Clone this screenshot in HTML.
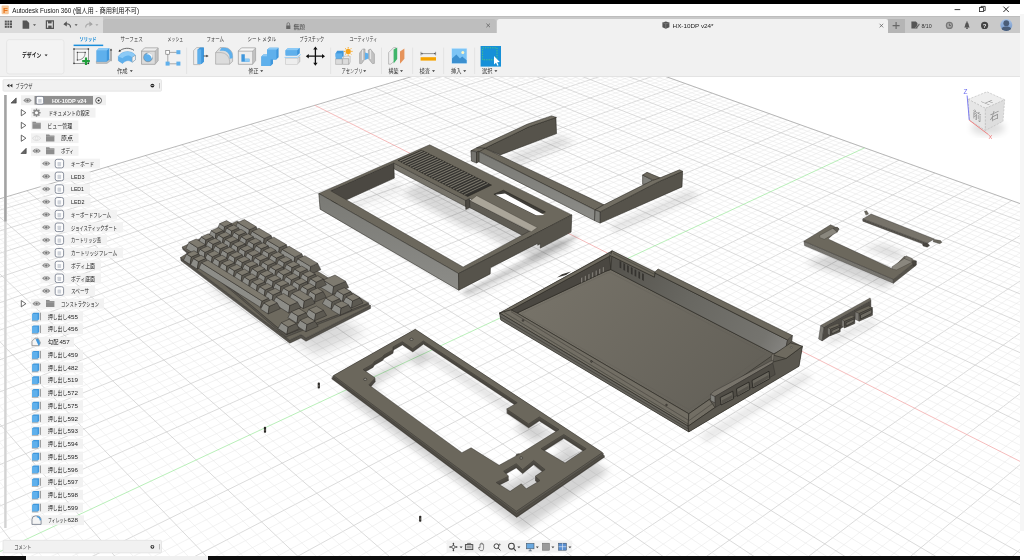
<!DOCTYPE html>
<html lang="ja"><head><meta charset="utf-8"><title>Autodesk Fusion 360</title>
<style>
html,body{margin:0;padding:0}
body{width:1024px;height:560px;overflow:hidden;background:#fff;position:relative;font-family:"Liberation Sans","Noto Sans CJK JP",sans-serif}
.abs{position:absolute}
#blacktop{left:0;top:0;width:1019.7px;height:3.7px;background:#000}
#rightstrip{left:1019.7px;top:14px;width:4.3px;height:517px;background:#f6f6f6}
#titlebar{left:0;top:3.7px;width:1019.7px;height:12.9px;background:#fff}
#toolbar{left:0;top:16.4px;width:1019.7px;height:16.8px;background:#c9c9c9;border-top:.8px solid #bdbdbd;box-sizing:border-box}
#qat{left:0;top:0;width:103px;height:16px;background:#dbdbdb}
#tab1{left:103px;top:2px;width:393px;height:14px;background:#bebebe;border-radius:2.5px 2.5px 0 0}
#tab2{left:496.6px;top:1.6px;width:391px;height:15px;background:#f1f1f1;border-radius:2.5px 2.5px 0 0}
#plus{left:888px;top:1.8px;width:16.6px;height:14.2px;background:#b5b5b5}
#ribbon{left:0;top:33px;width:1019.7px;height:43.6px;background:#f1f1f1;border-bottom:.7px solid #e3e3e3;box-sizing:border-box}
#viewport{left:0;top:77px;width:1019.7px;height:478.7px;overflow:hidden;background:#fff}
#viewport svg.vp{position:absolute;left:0;top:0;will-change:transform}
#bottombar{left:0;top:555.6px;width:1019.7px;height:4.4px;background:#0d0d0d}
#bottomlight{left:25.5px;top:0;width:182.5px;height:4.4px;background:#f0f0f0}
#ui{left:0;top:0;width:1024px;height:560px;pointer-events:none;will-change:transform}
#ui text{font-family:"Liberation Sans","Noto Sans CJK JP",sans-serif}
.grid line{stroke-width:.5}
.grid .m{stroke:#e7e7e7;stroke-width:.55}
.grid .M{stroke:#cbcbcb;stroke-width:.7}
.grid .E{stroke:#9c9c9c;stroke-width:.7}
.grid .R{stroke:#f2a0a0;stroke-width:.7}
.grid .G{stroke:#9be89b;stroke-width:.7}
</style></head>
<body>
<div id="blacktop" class="abs"></div>
<div id="rightstrip" class="abs"></div>
<div id="titlebar" class="abs"></div>
<div id="toolbar" class="abs"><div id="qat" class="abs"></div><div id="tab1" class="abs"></div><div id="tab2" class="abs"></div><div id="plus" class="abs"></div></div>
<div id="ribbon" class="abs"></div>
<div id="viewport" class="abs">
<svg class="vp" width="1020" height="479" viewBox="0 77 1020 479">
<g class="grid"><line x1="-236.2" y1="272.5" x2="554.7" y2="36.7" class="m"/>
<line x1="-233.5" y1="276.2" x2="559.1" y2="38.3" class="m"/>
<line x1="-230.9" y1="279.8" x2="563.6" y2="39.9" class="M"/>
<line x1="-228.2" y1="283.5" x2="568.0" y2="41.5" class="m"/>
<line x1="-225.5" y1="287.3" x2="572.5" y2="43.1" class="m"/>
<line x1="-222.8" y1="291.0" x2="577.1" y2="44.7" class="m"/>
<line x1="-220.0" y1="294.9" x2="581.6" y2="46.3" class="m"/>
<line x1="-217.3" y1="298.7" x2="586.2" y2="48.0" class="M"/>
<line x1="-214.4" y1="302.6" x2="590.8" y2="49.6" class="m"/>
<line x1="-211.6" y1="306.6" x2="595.5" y2="51.3" class="m"/>
<line x1="-208.7" y1="310.6" x2="600.2" y2="53.0" class="m"/>
<line x1="-205.8" y1="314.6" x2="604.9" y2="54.7" class="m"/>
<line x1="-202.9" y1="318.7" x2="609.6" y2="56.4" class="M"/>
<line x1="-199.9" y1="322.8" x2="614.4" y2="58.1" class="m"/>
<line x1="-196.9" y1="327.0" x2="619.2" y2="59.8" class="m"/>
<line x1="-193.9" y1="331.2" x2="624.1" y2="61.6" class="m"/>
<line x1="-190.8" y1="335.5" x2="629.0" y2="63.3" class="m"/>
<line x1="-187.7" y1="339.8" x2="633.9" y2="65.1" class="M"/>
<line x1="-184.5" y1="344.1" x2="638.8" y2="66.9" class="m"/>
<line x1="-181.4" y1="348.5" x2="643.8" y2="68.7" class="m"/>
<line x1="-178.1" y1="353.0" x2="648.9" y2="70.5" class="m"/>
<line x1="-174.9" y1="357.5" x2="653.9" y2="72.3" class="m"/>
<line x1="-171.6" y1="362.1" x2="659.0" y2="74.1" class="M"/>
<line x1="-168.3" y1="366.7" x2="664.2" y2="76.0" class="m"/>
<line x1="-164.9" y1="371.4" x2="669.4" y2="77.8" class="m"/>
<line x1="-161.5" y1="376.1" x2="674.6" y2="79.7" class="m"/>
<line x1="-158.1" y1="380.9" x2="679.8" y2="81.6" class="m"/>
<line x1="-154.6" y1="385.7" x2="685.1" y2="83.5" class="M"/>
<line x1="-151.0" y1="390.6" x2="690.5" y2="85.4" class="m"/>
<line x1="-147.5" y1="395.6" x2="695.8" y2="87.3" class="m"/>
<line x1="-143.8" y1="400.6" x2="701.2" y2="89.3" class="m"/>
<line x1="-140.2" y1="405.7" x2="706.7" y2="91.2" class="m"/>
<line x1="-136.5" y1="410.8" x2="712.2" y2="93.2" class="M"/>
<line x1="-132.7" y1="416.0" x2="717.7" y2="95.2" class="m"/>
<line x1="-128.9" y1="421.3" x2="723.3" y2="97.2" class="m"/>
<line x1="-125.1" y1="426.6" x2="728.9" y2="99.2" class="m"/>
<line x1="-121.2" y1="432.0" x2="734.6" y2="101.2" class="m"/>
<line x1="-117.2" y1="437.5" x2="740.3" y2="103.3" class="M"/>
<line x1="-113.2" y1="443.1" x2="746.1" y2="105.3" class="m"/>
<line x1="-109.2" y1="448.7" x2="751.9" y2="107.4" class="m"/>
<line x1="-105.1" y1="454.4" x2="757.7" y2="109.5" class="m"/>
<line x1="-100.9" y1="460.1" x2="763.6" y2="111.6" class="m"/>
<line x1="-96.7" y1="466.0" x2="769.6" y2="113.8" class="M"/>
<line x1="-92.5" y1="471.9" x2="775.5" y2="115.9" class="m"/>
<line x1="-88.1" y1="477.9" x2="781.6" y2="118.1" class="m"/>
<line x1="-83.8" y1="484.0" x2="787.7" y2="120.2" class="m"/>
<line x1="-79.3" y1="490.1" x2="793.8" y2="122.4" class="m"/>
<line x1="-74.8" y1="496.4" x2="800.0" y2="124.7" class="M"/>
<line x1="-70.3" y1="502.7" x2="806.2" y2="126.9" class="m"/>
<line x1="-65.6" y1="509.1" x2="812.5" y2="129.1" class="m"/>
<line x1="-61.0" y1="515.6" x2="818.8" y2="131.4" class="m"/>
<line x1="-56.2" y1="522.2" x2="825.2" y2="133.7" class="m"/>
<line x1="-51.4" y1="528.9" x2="831.6" y2="136.0" class="M"/>
<line x1="-46.5" y1="535.7" x2="838.1" y2="138.3" class="m"/>
<line x1="-41.5" y1="542.5" x2="844.7" y2="140.7" class="m"/>
<line x1="-36.5" y1="549.5" x2="851.3" y2="143.1" class="m"/>
<line x1="-31.4" y1="556.6" x2="857.9" y2="145.4" class="m"/>
<line x1="-21.0" y1="571.1" x2="871.4" y2="150.3" class="m"/>
<line x1="-15.6" y1="578.5" x2="878.2" y2="152.7" class="m"/>
<line x1="-10.2" y1="586.0" x2="885.1" y2="155.2" class="m"/>
<line x1="-4.7" y1="593.6" x2="892.0" y2="157.7" class="m"/>
<line x1="0.8" y1="601.3" x2="899.0" y2="160.2" class="M"/>
<line x1="6.5" y1="609.2" x2="906.1" y2="162.7" class="m"/>
<line x1="12.2" y1="617.1" x2="913.2" y2="165.3" class="m"/>
<line x1="18.1" y1="625.2" x2="920.4" y2="167.8" class="m"/>
<line x1="24.0" y1="633.4" x2="927.6" y2="170.4" class="m"/>
<line x1="30.0" y1="641.8" x2="934.9" y2="173.1" class="M"/>
<line x1="36.1" y1="650.3" x2="942.3" y2="175.7" class="m"/>
<line x1="42.3" y1="658.9" x2="949.8" y2="178.4" class="m"/>
<line x1="48.7" y1="667.7" x2="957.3" y2="181.1" class="m"/>
<line x1="55.1" y1="676.6" x2="964.8" y2="183.8" class="m"/>
<line x1="61.6" y1="685.6" x2="972.5" y2="186.5" class="M"/>
<line x1="68.2" y1="694.8" x2="980.2" y2="189.3" class="m"/>
<line x1="75.0" y1="704.1" x2="987.9" y2="192.1" class="m"/>
<line x1="81.8" y1="713.7" x2="995.8" y2="194.9" class="m"/>
<line x1="88.8" y1="723.3" x2="1003.7" y2="197.7" class="m"/>
<line x1="95.9" y1="733.2" x2="1011.7" y2="200.6" class="M"/>
<line x1="103.1" y1="743.2" x2="1019.8" y2="203.5" class="m"/>
<line x1="110.4" y1="753.3" x2="1027.9" y2="206.4" class="m"/>
<line x1="117.9" y1="763.7" x2="1036.1" y2="209.4" class="m"/>
<line x1="125.5" y1="774.2" x2="1044.4" y2="212.3" class="m"/>
<line x1="133.2" y1="784.9" x2="1052.8" y2="215.3" class="M"/>
<line x1="141.1" y1="795.9" x2="1061.2" y2="218.4" class="m"/>
<line x1="149.1" y1="807.0" x2="1069.8" y2="221.4" class="m"/>
<line x1="157.2" y1="818.3" x2="1078.4" y2="224.5" class="m"/>
<line x1="165.5" y1="829.8" x2="1087.1" y2="227.6" class="m"/>
<line x1="174.0" y1="841.6" x2="1095.8" y2="230.8" class="M"/>
<line x1="182.6" y1="853.5" x2="1104.7" y2="233.9" class="m"/>
<line x1="191.4" y1="865.7" x2="1113.6" y2="237.2" class="m"/>
<line x1="200.4" y1="878.1" x2="1122.7" y2="240.4" class="m"/>
<line x1="209.5" y1="890.8" x2="1131.8" y2="243.7" class="m"/>
<line x1="218.8" y1="903.7" x2="1141.0" y2="247.0" class="M"/>
<line x1="228.3" y1="916.9" x2="1150.3" y2="250.3" class="m"/>
<line x1="238.0" y1="930.3" x2="1159.7" y2="253.7" class="m"/>
<line x1="247.9" y1="944.0" x2="1169.2" y2="257.1" class="m"/>
<line x1="257.9" y1="958.0" x2="1178.8" y2="260.5" class="m"/>
<line x1="268.2" y1="972.3" x2="1188.4" y2="264.0" class="M"/>
<line x1="278.7" y1="986.9" x2="1198.2" y2="267.5" class="m"/>
<line x1="289.5" y1="1001.7" x2="1208.1" y2="271.0" class="m"/>
<line x1="300.4" y1="1016.9" x2="1218.1" y2="274.6" class="m"/>
<line x1="311.6" y1="1032.5" x2="1228.1" y2="278.2" class="m"/>
<line x1="323.0" y1="1048.3" x2="1238.3" y2="281.9" class="M"/>
<line x1="334.7" y1="1064.5" x2="1248.6" y2="285.6" class="m"/>
<line x1="346.6" y1="1081.1" x2="1259.0" y2="289.3" class="m"/>
<line x1="358.8" y1="1098.0" x2="1269.5" y2="293.1" class="m"/>
<line x1="371.3" y1="1115.3" x2="1280.1" y2="296.9" class="m"/>
<line x1="384.1" y1="1133.1" x2="1290.9" y2="300.7" class="M"/>
<line x1="397.2" y1="1151.2" x2="1301.7" y2="304.6" class="m"/>
<line x1="410.5" y1="1169.7" x2="1312.7" y2="308.5" class="m"/>
<line x1="424.2" y1="1188.7" x2="1323.8" y2="312.5" class="m"/>
<line x1="-238.4" y1="269.4" x2="424.2" y2="1188.7" class="m"/>
<line x1="-227.8" y1="266.2" x2="441.7" y2="1171.7" class="m"/>
<line x1="-217.2" y1="263.1" x2="458.9" y2="1155.0" class="m"/>
<line x1="-206.8" y1="260.0" x2="475.6" y2="1138.7" class="M"/>
<line x1="-196.4" y1="256.9" x2="492.1" y2="1122.6" class="m"/>
<line x1="-186.1" y1="253.8" x2="508.2" y2="1107.0" class="m"/>
<line x1="-176.0" y1="250.8" x2="523.9" y2="1091.6" class="m"/>
<line x1="-165.9" y1="247.8" x2="539.4" y2="1076.5" class="m"/>
<line x1="-155.9" y1="244.9" x2="554.6" y2="1061.8" class="M"/>
<line x1="-146.0" y1="241.9" x2="569.4" y2="1047.3" class="m"/>
<line x1="-136.2" y1="239.0" x2="584.0" y2="1033.1" class="m"/>
<line x1="-126.4" y1="236.1" x2="598.3" y2="1019.2" class="m"/>
<line x1="-116.8" y1="233.3" x2="612.3" y2="1005.6" class="m"/>
<line x1="-107.2" y1="230.4" x2="626.0" y2="992.2" class="M"/>
<line x1="-97.8" y1="227.6" x2="639.5" y2="979.0" class="m"/>
<line x1="-88.4" y1="224.9" x2="652.8" y2="966.1" class="m"/>
<line x1="-79.0" y1="222.1" x2="665.8" y2="953.5" class="m"/>
<line x1="-69.8" y1="219.4" x2="678.5" y2="941.0" class="m"/>
<line x1="-60.7" y1="216.6" x2="691.1" y2="928.8" class="M"/>
<line x1="-51.6" y1="213.9" x2="703.4" y2="916.8" class="m"/>
<line x1="-42.6" y1="211.3" x2="715.5" y2="905.1" class="m"/>
<line x1="-33.6" y1="208.6" x2="727.3" y2="893.5" class="m"/>
<line x1="-24.8" y1="206.0" x2="739.0" y2="882.1" class="m"/>
<line x1="-16.0" y1="203.4" x2="750.5" y2="870.9" class="M"/>
<line x1="-7.3" y1="200.8" x2="761.8" y2="859.9" class="m"/>
<line x1="1.3" y1="198.3" x2="772.9" y2="849.1" class="m"/>
<line x1="9.9" y1="195.7" x2="783.8" y2="838.5" class="m"/>
<line x1="18.4" y1="193.2" x2="794.5" y2="828.1" class="m"/>
<line x1="26.8" y1="190.7" x2="805.0" y2="817.8" class="M"/>
<line x1="35.1" y1="188.2" x2="815.4" y2="807.7" class="m"/>
<line x1="43.4" y1="185.8" x2="825.6" y2="797.8" class="m"/>
<line x1="51.6" y1="183.3" x2="835.6" y2="788.0" class="m"/>
<line x1="59.8" y1="180.9" x2="845.5" y2="778.4" class="m"/>
<line x1="67.9" y1="178.5" x2="855.2" y2="768.9" class="M"/>
<line x1="75.9" y1="176.2" x2="864.8" y2="759.6" class="m"/>
<line x1="83.8" y1="173.8" x2="874.2" y2="750.4" class="m"/>
<line x1="91.7" y1="171.5" x2="883.5" y2="741.4" class="m"/>
<line x1="99.6" y1="169.1" x2="892.6" y2="732.5" class="m"/>
<line x1="107.3" y1="166.8" x2="901.6" y2="723.7" class="M"/>
<line x1="115.0" y1="164.6" x2="910.4" y2="715.1" class="m"/>
<line x1="122.7" y1="162.3" x2="919.2" y2="706.6" class="m"/>
<line x1="130.3" y1="160.0" x2="927.8" y2="698.3" class="m"/>
<line x1="137.8" y1="157.8" x2="936.2" y2="690.0" class="m"/>
<line x1="145.3" y1="155.6" x2="944.6" y2="681.9" class="M"/>
<line x1="152.7" y1="153.4" x2="952.8" y2="673.9" class="m"/>
<line x1="160.0" y1="151.2" x2="960.9" y2="666.0" class="m"/>
<line x1="167.3" y1="149.0" x2="968.8" y2="658.2" class="m"/>
<line x1="174.6" y1="146.9" x2="976.7" y2="650.6" class="m"/>
<line x1="181.8" y1="144.8" x2="984.5" y2="643.0" class="M"/>
<line x1="188.9" y1="142.7" x2="992.1" y2="635.6" class="m"/>
<line x1="196.0" y1="140.6" x2="999.7" y2="628.2" class="m"/>
<line x1="203.0" y1="138.5" x2="1007.1" y2="621.0" class="m"/>
<line x1="210.0" y1="136.4" x2="1014.4" y2="613.8" class="m"/>
<line x1="216.9" y1="134.3" x2="1021.7" y2="606.8" class="M"/>
<line x1="223.8" y1="132.3" x2="1028.8" y2="599.8" class="m"/>
<line x1="230.6" y1="130.3" x2="1035.8" y2="593.0" class="m"/>
<line x1="237.4" y1="128.3" x2="1042.8" y2="586.2" class="m"/>
<line x1="244.1" y1="126.3" x2="1049.6" y2="579.5" class="m"/>
<line x1="250.8" y1="124.3" x2="1056.4" y2="573.0" class="M"/>
<line x1="257.4" y1="122.3" x2="1063.1" y2="566.5" class="m"/>
<line x1="263.9" y1="120.4" x2="1069.6" y2="560.1" class="m"/>
<line x1="270.5" y1="118.5" x2="1076.1" y2="553.7" class="m"/>
<line x1="277.0" y1="116.5" x2="1082.6" y2="547.5" class="m"/>
<line x1="283.4" y1="114.6" x2="1088.9" y2="541.3" class="M"/>
<line x1="289.8" y1="112.7" x2="1095.1" y2="535.2" class="m"/>
<line x1="296.1" y1="110.9" x2="1101.3" y2="529.2" class="m"/>
<line x1="302.4" y1="109.0" x2="1107.4" y2="523.3" class="m"/>
<line x1="308.7" y1="107.1" x2="1113.4" y2="517.4" class="m"/>
<line x1="321.1" y1="103.5" x2="1125.2" y2="505.9" class="m"/>
<line x1="327.2" y1="101.6" x2="1131.0" y2="500.2" class="m"/>
<line x1="333.3" y1="99.8" x2="1136.8" y2="494.7" class="m"/>
<line x1="339.3" y1="98.1" x2="1142.4" y2="489.2" class="m"/>
<line x1="345.3" y1="96.3" x2="1148.0" y2="483.7" class="M"/>
<line x1="351.2" y1="94.5" x2="1153.5" y2="478.3" class="m"/>
<line x1="357.2" y1="92.8" x2="1159.0" y2="473.0" class="m"/>
<line x1="363.0" y1="91.0" x2="1164.4" y2="467.8" class="m"/>
<line x1="368.9" y1="89.3" x2="1169.7" y2="462.6" class="m"/>
<line x1="374.7" y1="87.6" x2="1175.0" y2="457.4" class="M"/>
<line x1="380.4" y1="85.9" x2="1180.2" y2="452.4" class="m"/>
<line x1="386.1" y1="84.2" x2="1185.3" y2="447.3" class="m"/>
<line x1="391.8" y1="82.5" x2="1190.4" y2="442.4" class="m"/>
<line x1="397.4" y1="80.8" x2="1195.5" y2="437.5" class="m"/>
<line x1="403.0" y1="79.2" x2="1200.4" y2="432.6" class="M"/>
<line x1="408.6" y1="77.5" x2="1205.3" y2="427.9" class="m"/>
<line x1="414.1" y1="75.9" x2="1210.2" y2="423.1" class="m"/>
<line x1="419.6" y1="74.2" x2="1215.0" y2="418.4" class="m"/>
<line x1="425.1" y1="72.6" x2="1219.8" y2="413.8" class="m"/>
<line x1="430.5" y1="71.0" x2="1224.5" y2="409.2" class="M"/>
<line x1="435.9" y1="69.4" x2="1229.1" y2="404.7" class="m"/>
<line x1="441.2" y1="67.8" x2="1233.7" y2="400.2" class="m"/>
<line x1="446.5" y1="66.3" x2="1238.3" y2="395.8" class="m"/>
<line x1="451.8" y1="64.7" x2="1242.8" y2="391.4" class="m"/>
<line x1="457.1" y1="63.1" x2="1247.2" y2="387.1" class="M"/>
<line x1="462.3" y1="61.6" x2="1251.6" y2="382.8" class="m"/>
<line x1="467.4" y1="60.1" x2="1256.0" y2="378.5" class="m"/>
<line x1="472.6" y1="58.5" x2="1260.3" y2="374.3" class="m"/>
<line x1="477.7" y1="57.0" x2="1264.5" y2="370.2" class="m"/>
<line x1="482.8" y1="55.5" x2="1268.8" y2="366.1" class="M"/>
<line x1="487.8" y1="54.0" x2="1272.9" y2="362.0" class="m"/>
<line x1="492.8" y1="52.5" x2="1277.1" y2="358.0" class="m"/>
<line x1="497.8" y1="51.1" x2="1281.2" y2="354.0" class="m"/>
<line x1="502.8" y1="49.6" x2="1285.2" y2="350.1" class="m"/>
<line x1="507.7" y1="48.1" x2="1289.2" y2="346.2" class="M"/>
<line x1="512.6" y1="46.7" x2="1293.2" y2="342.3" class="m"/>
<line x1="517.4" y1="45.2" x2="1297.1" y2="338.5" class="m"/>
<line x1="522.3" y1="43.8" x2="1301.0" y2="334.7" class="m"/>
<line x1="527.0" y1="42.4" x2="1304.9" y2="330.9" class="m"/>
<line x1="531.8" y1="41.0" x2="1308.7" y2="327.2" class="M"/>
<line x1="536.6" y1="39.6" x2="1312.4" y2="323.5" class="m"/>
<line x1="541.3" y1="38.2" x2="1316.2" y2="319.9" class="m"/>
<line x1="545.9" y1="36.8" x2="1319.9" y2="316.3" class="m"/>
<line x1="550.6" y1="35.4" x2="1323.5" y2="312.7" class="m"/>
<line x1="-238.4" y1="269.4" x2="550.9" y2="35.3" class="E"/>
<line x1="550.9" y1="35.3" x2="1323.8" y2="312.5" class="E"/>
<line x1="314.9" y1="105.3" x2="1119.4" y2="511.6" class="R"/>
<line x1="-26.2" y1="563.8" x2="864.6" y2="147.8" class="G"/></g>
<defs><filter id="b2" x="-20%" y="-20%" width="140%" height="140%"><feGaussianBlur stdDeviation="2"/></filter><filter id="b3" x="-20%" y="-20%" width="140%" height="140%"><feGaussianBlur stdDeviation="3.5"/></filter><filter id="b5" x="-30%" y="-30%" width="160%" height="160%"><feGaussianBlur stdDeviation="6"/></filter><linearGradient id="gl" x1="0" y1="0" x2="0" y2="1"><stop offset="0" stop-color="#7a7a75"/><stop offset="1" stop-color="#8c8c88"/></linearGradient></defs>
<path d="M347.5 224.4 L435.7 173.6 L574.1 245.1 L473.5 297.1Z M349.8 223.4 L399.9 192.5 L469.0 229.8 L472.8 227.9 L533.5 260.5 L472.1 293.7Z " fill="#000" fill-rule="evenodd" opacity="0.15" filter="url(#b3)"/>
<path d="M462.3 292.6 L574.5 234.7 L579.1 237.1 L466.8 295.2Z " fill="#000" fill-rule="evenodd" opacity="0.22" filter="url(#b2)"/>
<path d="M340.1 209.5 L398.1 183.1 L403.3 185.9 L345.3 212.4Z " fill="#000" fill-rule="evenodd" opacity="0.12" filter="url(#b3)"/>
<polygon points="330.7,190.8 393.8,163.0 394.3,178.1 331.9,206.5" fill="#4b4842" stroke="#262420" stroke-width="0.55" stroke-linejoin="round"/>
<polygon points="393.8,163.0 465.6,200.3 465.8,206.6 394.0,168.8" fill="#77746b" stroke="#262420" stroke-width="0.55" stroke-linejoin="round"/>
<polygon points="469.5,200.1 531.1,232.0 530.8,239.8 469.7,207.5" fill="#5f5c54" stroke="#262420" stroke-width="0.55" stroke-linejoin="round"/>
<polygon points="465.6,200.3 469.5,198.4 469.7,207.5 465.8,209.4" fill="#4b4842" stroke="#262420" stroke-width="0.55" stroke-linejoin="round"/>
<path d="M318.8 193.5 L429.7 144.8 L571.8 214.9 L458.5 273.5Z M330.7 190.8 L393.8 163.0 L465.6 200.3 L469.5 198.4 L531.1 230.3 L463.1 267.0Z " fill="#6c685d" fill-rule="evenodd" stroke="#2e2c28" stroke-width="0.45" stroke-linejoin="round"/>
<polygon points="398.1,160.5 421.6,150.2 491.5,185.1 467.7,196.5" fill="#33322f" stroke="#262420" stroke-width="0.55" stroke-linejoin="round"/>
<polygon points="399.9,161.0 422.4,151.0" fill="none" stroke="#7a766b" stroke-width="1.05" stroke-linejoin="round"/>
<polygon points="402.5,162.3 425.0,152.3" fill="none" stroke="#7a766b" stroke-width="1.05" stroke-linejoin="round"/>
<polygon points="405.1,163.6 427.6,153.6" fill="none" stroke="#7a766b" stroke-width="1.05" stroke-linejoin="round"/>
<polygon points="407.7,165.0 430.2,154.9" fill="none" stroke="#7a766b" stroke-width="1.05" stroke-linejoin="round"/>
<polygon points="410.3,166.3 432.8,156.3" fill="none" stroke="#7a766b" stroke-width="1.05" stroke-linejoin="round"/>
<polygon points="412.9,167.7 435.5,157.6" fill="none" stroke="#7a766b" stroke-width="1.05" stroke-linejoin="round"/>
<polygon points="415.6,169.0 438.1,158.9" fill="none" stroke="#7a766b" stroke-width="1.05" stroke-linejoin="round"/>
<polygon points="418.2,170.4 440.8,160.2" fill="none" stroke="#7a766b" stroke-width="1.05" stroke-linejoin="round"/>
<polygon points="420.9,171.8 443.4,161.6" fill="none" stroke="#7a766b" stroke-width="1.05" stroke-linejoin="round"/>
<polygon points="423.5,173.1 446.1,162.9" fill="none" stroke="#7a766b" stroke-width="1.05" stroke-linejoin="round"/>
<polygon points="426.2,174.5 448.8,164.2" fill="none" stroke="#7a766b" stroke-width="1.05" stroke-linejoin="round"/>
<polygon points="428.9,175.9 451.5,165.6" fill="none" stroke="#7a766b" stroke-width="1.05" stroke-linejoin="round"/>
<polygon points="431.6,177.3 454.2,166.9" fill="none" stroke="#7a766b" stroke-width="1.05" stroke-linejoin="round"/>
<polygon points="434.3,178.7 456.9,168.3" fill="none" stroke="#7a766b" stroke-width="1.05" stroke-linejoin="round"/>
<polygon points="437.0,180.1 459.6,169.7" fill="none" stroke="#7a766b" stroke-width="1.05" stroke-linejoin="round"/>
<polygon points="439.7,181.5 462.4,171.0" fill="none" stroke="#7a766b" stroke-width="1.05" stroke-linejoin="round"/>
<polygon points="442.5,182.9 465.1,172.4" fill="none" stroke="#7a766b" stroke-width="1.05" stroke-linejoin="round"/>
<polygon points="445.2,184.3 467.9,173.8" fill="none" stroke="#7a766b" stroke-width="1.05" stroke-linejoin="round"/>
<polygon points="448.0,185.7 470.6,175.2" fill="none" stroke="#7a766b" stroke-width="1.05" stroke-linejoin="round"/>
<polygon points="450.7,187.1 473.4,176.5" fill="none" stroke="#7a766b" stroke-width="1.05" stroke-linejoin="round"/>
<polygon points="453.5,188.6 476.2,177.9" fill="none" stroke="#7a766b" stroke-width="1.05" stroke-linejoin="round"/>
<polygon points="456.3,190.0 479.0,179.3" fill="none" stroke="#7a766b" stroke-width="1.05" stroke-linejoin="round"/>
<polygon points="459.1,191.5 481.8,180.7" fill="none" stroke="#7a766b" stroke-width="1.05" stroke-linejoin="round"/>
<polygon points="461.9,192.9 484.6,182.2" fill="none" stroke="#7a766b" stroke-width="1.05" stroke-linejoin="round"/>
<polygon points="464.7,194.4 487.4,183.6" fill="none" stroke="#7a766b" stroke-width="1.05" stroke-linejoin="round"/>
<polygon points="470.2,200.8 476.7,195.7 537.3,227.6 531.4,231.7" fill="#aaa599" stroke="#2e2c28" stroke-width="0.3" stroke-linejoin="round"/>
<polygon points="493.9,194.2 503.4,190.2 545.4,211.9 536.0,215.3" fill="#3f3d38" stroke="#262420" stroke-width="0.55" stroke-linejoin="round"/>
<polygon points="495.5,194.8 505.0,193.6 544.4,215.1 536.0,215.3" fill="#ffffff"/>
<polygon points="318.8,193.5 458.5,273.5 458.8,290.2 320.1,209.2" fill="url(#gl)" stroke="#262420" stroke-width="0.55" stroke-linejoin="round"/>
<polygon points="458.5,273.5 571.8,214.9 571.1,232.1 540.3,248.1 540.4,243.8 537.7,245.2 537.8,243.3 490.4,267.8 490.2,273.9 458.8,290.2" fill="#56534b" stroke="#262420" stroke-width="0.55" stroke-linejoin="round"/>
<polygon points="505.0,158.0 560.0,136.0 575.0,142.0 515.0,166.0" fill="#000" opacity="0.12" filter="url(#b3)"/>
<polygon points="610.0,226.0 690.0,190.0 700.0,196.0 615.0,232.0" fill="#000" opacity="0.12" filter="url(#b3)"/>
<polygon points="484.6,148.3 529.0,126.8 555.9,117.4 556.5,133.6 500.3,154.9" fill="#56534b" stroke="#262420" stroke-width="0.55" stroke-linejoin="round"/>
<polygon points="476.5,147.8 527.1,124.3 551.5,115.9 556.5,117.4 529.0,126.8 484.6,148.3" fill="#726e63" stroke="#262420" stroke-width="0.55" stroke-linejoin="round"/>
<polygon points="478.8,151.1 484.6,148.3 603.9,204.8 595.1,210.0" fill="#6c685d" stroke="#262420" stroke-width="0.55" stroke-linejoin="round"/>
<polygon points="478.8,151.5 595.1,210.0 594.5,220.6 478.8,161.8" fill="url(#gl)" stroke="#262420" stroke-width="0.55" stroke-linejoin="round"/>
<polygon points="470.9,150.8 476.3,147.9 485.0,148.4 478.8,151.8" fill="#6c685d" stroke="#262420" stroke-width="0.55" stroke-linejoin="round"/>
<polygon points="470.9,150.8 476.5,152.0 476.5,163.0 471.5,161.1" fill="#74736e" stroke="#262420" stroke-width="0.55" stroke-linejoin="round"/>
<polygon points="476.5,152.0 478.8,151.1 478.8,161.8 476.5,163.0" fill="#56534b" stroke="#262420" stroke-width="0.55" stroke-linejoin="round"/>
<polygon points="642.6,175.0 652.0,180.0 652.0,184.0 642.6,184.4" fill="#82827d" stroke="#262420" stroke-width="0.55" stroke-linejoin="round"/>
<polygon points="642.6,175.0 647.0,172.3 660.8,178.1 657.0,181.9" fill="#6c685d" stroke="#262420" stroke-width="0.55" stroke-linejoin="round"/>
<polygon points="600.1,211.9 658.3,181.9 682.6,171.3 682.0,186.9 600.1,223.1" fill="#56534b" stroke="#262420" stroke-width="0.55" stroke-linejoin="round"/>
<polygon points="600.1,211.9 595.1,209.8 603.9,204.8 652.0,180.6 659.5,178.1 679.5,169.8 682.6,171.3 658.3,181.9" fill="#726e63" stroke="#262420" stroke-width="0.55" stroke-linejoin="round"/>
<polygon points="595.1,210.0 600.1,211.9 600.1,223.1 594.5,220.6" fill="#82827d" stroke="#262420" stroke-width="0.55" stroke-linejoin="round"/>
<polygon points="700.0,436.0 806.0,372.0 812.0,378.0 706.0,442.0" fill="#000" opacity="0.1" filter="url(#b3)"/>
<defs><linearGradient id="gfloor" gradientUnits="userSpaceOnUse" x1="560" y1="270" x2="740" y2="420"><stop offset="0" stop-color="#767268"/><stop offset="1" stop-color="#625f57"/></linearGradient><linearGradient id="gback" gradientUnits="userSpaceOnUse" x1="620" y1="260" x2="790" y2="350"><stop offset="0" stop-color="#56544e"/><stop offset=".4" stop-color="#686761"/><stop offset=".85" stop-color="#75746f"/><stop offset="1" stop-color="#888784"/></linearGradient></defs>
<polygon points="499.5,313.0 611.9,250.6 802.5,346.2 799.0,366.3 688.8,431.9 500.8,320.0" fill="#5d5a52"/>
<polygon points="517.0,313.0 605.8,271.2 610.8,269.5 773.8,353.8 771.0,356.5 709.4,399.4 688.8,413.8" fill="url(#gfloor)" stroke="#262420" stroke-width="0.55" stroke-linejoin="round"/>
<polygon points="521.5,313.6 606.0,273.6 610.0,272.4 766.0,353.4 707.0,397.0 688.9,409.6" fill="none" stroke="#5f5c54" stroke-width="0.3" stroke-linejoin="round"/>
<polygon points="510.8,310.0 609.5,256.2 610.8,269.5 605.8,271.2 517.0,313.0" fill="#4a4741" stroke="#262420" stroke-width="0.55" stroke-linejoin="round"/>
<polygon points="581.0,277.7 582.5,277.0 582.5,282.3 581.0,283.0" fill="#8a877f" stroke="#2e2c28" stroke-width="0.3" stroke-linejoin="round"/>
<polygon points="584.6,275.9 586.1,275.2 586.1,280.6 584.6,281.2" fill="#8a877f" stroke="#2e2c28" stroke-width="0.3" stroke-linejoin="round"/>
<polygon points="588.2,274.2 589.7,273.5 589.7,278.8 588.2,279.5" fill="#8a877f" stroke="#2e2c28" stroke-width="0.3" stroke-linejoin="round"/>
<polygon points="591.8,272.4 593.3,271.8 593.3,277.1 591.8,277.8" fill="#8a877f" stroke="#2e2c28" stroke-width="0.3" stroke-linejoin="round"/>
<polygon points="595.4,270.7 596.9,270.0 596.9,275.3 595.4,276.0" fill="#8a877f" stroke="#2e2c28" stroke-width="0.3" stroke-linejoin="round"/>
<polygon points="599.0,268.9 600.5,268.2 600.5,273.6 599.0,274.2" fill="#8a877f" stroke="#2e2c28" stroke-width="0.3" stroke-linejoin="round"/>
<polygon points="602.6,267.2 604.1,266.5 604.1,271.8 602.6,272.5" fill="#8a877f" stroke="#2e2c28" stroke-width="0.3" stroke-linejoin="round"/>
<polygon points="611.9,256.2 654.4,277.1 655.0,273.0 787.5,340.0 786.0,347.5 773.8,353.8 610.8,269.5" fill="url(#gback)" stroke="#262420" stroke-width="0.55" stroke-linejoin="round"/>
<polygon points="619.6,261.0 621.3,261.8 621.3,268.6 619.6,267.8" fill="#35332f"/>
<polygon points="623.4,263.1 625.1,263.9 625.1,270.7 623.4,269.9" fill="#35332f"/>
<polygon points="627.1,265.1 628.8,265.9 628.8,272.7 627.1,271.9" fill="#35332f"/>
<polygon points="630.9,267.1 632.6,267.9 632.6,274.8 630.9,273.9" fill="#35332f"/>
<polygon points="634.6,269.2 636.3,270.0 636.3,276.8 634.6,276.0" fill="#35332f"/>
<polygon points="638.4,271.2 640.1,272.1 640.1,278.9 638.4,278.1" fill="#35332f"/>
<polygon points="642.1,273.3 643.8,274.1 643.8,280.9 642.1,280.1" fill="#35332f"/>
<polygon points="611.9,250.6 655.0,271.9 654.4,277.1 611.9,256.2 609.5,256.2" fill="#6c685d" stroke="#262420" stroke-width="0.55" stroke-linejoin="round"/>
<polygon points="613.0,253.4 654.7,274.4" fill="none" stroke="#45433d" stroke-width="0.4" stroke-linejoin="round"/>
<polygon points="655.0,271.9 658.1,269.0 792.5,335.6 787.5,340.0 655.0,273.0" fill="#6c685d" stroke="#262420" stroke-width="0.55" stroke-linejoin="round"/>
<polygon points="792.5,335.6 787.5,340.0 786.0,347.5 791.9,341.3" fill="#5a574f" stroke="#2e2c28" stroke-width="0.4" stroke-linejoin="round"/>
<polygon points="499.5,313.0 612.0,251.3 609.5,256.2 510.8,310.0" fill="#6e6a5f" stroke="#262420" stroke-width="0.55" stroke-linejoin="round"/>
<polygon points="557.0,277.5 562.0,274.2 571.0,271.6 566.0,275.0" fill="#3a3834"/>
<polygon points="499.5,313.0 510.8,310.0 517.0,313.0 688.8,413.8 688.1,426.2" fill="#726e64" stroke="#262420" stroke-width="0.55" stroke-linejoin="round"/>
<polygon points="688.1,426.2 688.8,413.8 709.4,399.4 715.0,407.5" fill="#726e64" stroke="#262420" stroke-width="0.55" stroke-linejoin="round"/>
<polygon points="689.0,420.6 712.4,403.6" fill="none" stroke="#45433d" stroke-width="0.35" stroke-linejoin="round"/>
<polygon points="504.0,312.4 688.5,424.2" fill="none" stroke="#45433d" stroke-width="0.4" stroke-linejoin="round"/>
<polygon points="511.0,311.6 689.0,420.6" fill="none" stroke="#45433d" stroke-width="0.35" stroke-linejoin="round"/>
<circle cx="523" cy="320.5" r=".9" fill="#55524b" stroke="#1e1d1a" stroke-width=".4"/>
<circle cx="591.5" cy="361.5" r=".9" fill="#55524b" stroke="#1e1d1a" stroke-width=".4"/>
<circle cx="666.5" cy="405" r=".9" fill="#55524b" stroke="#1e1d1a" stroke-width=".4"/>
<polygon points="499.5,313.0 688.1,426.2 688.8,431.9 500.8,320.0" fill="#67655e" stroke="#262420" stroke-width="0.55" stroke-linejoin="round"/>
<polygon points="500.0,316.4 688.3,429.0" fill="none" stroke="#3d3b36" stroke-width="0.4" stroke-linejoin="round"/>
<polygon points="688.1,426.2 715.0,407.5 773.0,362.0 786.0,358.5 802.5,346.2 799.0,366.3 688.8,431.9" fill="#5a574f" stroke="#262420" stroke-width="0.55" stroke-linejoin="round"/>
<polygon points="710.6,394.4 715.0,396.5 715.0,402.8 710.6,400.6" fill="#82827d" stroke="#2e2c28" stroke-width="0.4" stroke-linejoin="round"/>
<polygon points="710.6,394.2 714.0,391.2 773.5,359.6 772.8,363.0 715.0,396.5" fill="#77736a" stroke="#2e2c28" stroke-width="0.4" stroke-linejoin="round"/>
<polygon points="715.0,396.5 772.8,363.0 775.2,374.5 715.6,407.2" fill="#504d46" stroke="#2e2c28" stroke-width="0.4" stroke-linejoin="round"/>
<polygon points="720.2,397.5 732.8,391.2 733.6,398.7 721.0,405.0" fill="#6a675e" stroke="#25231f" stroke-width="0.8" stroke-linejoin="round"/>
<polygon points="721.7,400.5 732.2,395.0 732.8,397.8 722.0,404.1" fill="#55524b"/>
<polygon points="736.5,388.8 749.0,382.0 749.8,389.5 737.3,396.3" fill="#6a675e" stroke="#25231f" stroke-width="0.8" stroke-linejoin="round"/>
<polygon points="738.0,391.8 748.4,385.8 749.0,388.6 738.3,395.4" fill="#55524b"/>
<polygon points="752.0,380.5 769.0,371.2 769.8,378.7 752.8,388.0" fill="#6a675e" stroke="#25231f" stroke-width="0.8" stroke-linejoin="round"/>
<polygon points="753.5,383.5 768.4,375.0 769.0,377.8 753.8,387.1" fill="#55524b"/>
<polygon points="773.0,355.0 790.5,343.0 802.5,346.2 786.0,358.5" fill="#6e6a5f" stroke="#262420" stroke-width="0.55" stroke-linejoin="round"/>
<polygon points="771.5,354.5 774.0,354.0 773.5,360.0 771.5,361.0" fill="#77736a" stroke="#2e2c28" stroke-width="0.3" stroke-linejoin="round"/>
<circle cx="791.2" cy="347.4" r=".9" fill="#8a877f" stroke="#222" stroke-width=".3"/>
<circle cx="610.3" cy="254.3" r=".8" fill="#8a877f" stroke="#222" stroke-width=".3"/>
<polygon points="206.0,285.0 258.5,277.5 366.0,332.5 316.0,355.0" fill="#000" opacity="0.14" filter="url(#b5)"/>
<polygon points="180.5,257.5 289.8,340.0 301.0,334.5 306.0,338.0 370.5,305.5 370.5,308.5 306.0,341.2 301.0,338.0 289.8,343.2 181.0,260.8" fill="#54514a" stroke="#2e2c28" stroke-width="0.4" stroke-linejoin="round"/>
<polygon points="180.5,257.5 236.0,222.5 370.5,305.5 306.0,338.0 301.0,334.5 289.8,340.0" fill="#6b675c" stroke="#2e2c28" stroke-width="0.4" stroke-linejoin="round"/>
<polygon points="182.2,247.0 286.0,334.5 368.5,303.0 368.5,304.5 286.0,337.0 182.8,249.5" fill="#58554e" stroke="#2e2c28" stroke-width="0.4" stroke-linejoin="round"/>
<polygon points="182.2,247.0 237.2,221.0 368.5,303.0 286.0,334.5" fill="#6e6a5f" stroke="#2e2c28" stroke-width="0.4" stroke-linejoin="round"/>
<polygon points="234.7,229.3 248.4,237.6 249.4,229.6 237.6,222.5" fill="#8d8d88" stroke="#24221f" stroke-width="0.45" stroke-linejoin="round"/>
<polygon points="248.4,237.6 259.1,232.9 256.2,226.7 249.4,229.6" fill="#5c5951" stroke="#24221f" stroke-width="0.45" stroke-linejoin="round"/>
<polygon points="237.6,222.5 249.4,229.6 256.2,226.7 244.4,219.6" fill="#7e7a6f" stroke="#24221f" stroke-width="0.45" stroke-linejoin="round"/>
<polygon points="249.2,238.0 263.2,246.5 264.2,238.5 252.1,231.3" fill="#8d8d88" stroke="#24221f" stroke-width="0.45" stroke-linejoin="round"/>
<polygon points="263.2,246.5 274.0,241.8 271.1,235.5 264.2,238.5" fill="#5c5951" stroke="#24221f" stroke-width="0.45" stroke-linejoin="round"/>
<polygon points="252.1,231.3 264.2,238.5 271.1,235.5 259.0,228.3" fill="#7e7a6f" stroke="#24221f" stroke-width="0.45" stroke-linejoin="round"/>
<polygon points="264.1,247.0 278.4,255.6 279.4,247.6 267.0,240.2" fill="#8d8d88" stroke="#24221f" stroke-width="0.45" stroke-linejoin="round"/>
<polygon points="278.4,255.6 289.3,250.9 286.3,244.6 279.4,247.6" fill="#5c5951" stroke="#24221f" stroke-width="0.45" stroke-linejoin="round"/>
<polygon points="267.0,240.2 279.4,247.6 286.3,244.6 273.9,237.2" fill="#7e7a6f" stroke="#24221f" stroke-width="0.45" stroke-linejoin="round"/>
<polygon points="279.2,256.1 293.9,264.9 294.9,257.0 282.2,249.4" fill="#8d8d88" stroke="#24221f" stroke-width="0.45" stroke-linejoin="round"/>
<polygon points="293.9,264.9 304.8,260.2 301.9,253.9 294.9,257.0" fill="#5c5951" stroke="#24221f" stroke-width="0.45" stroke-linejoin="round"/>
<polygon points="282.2,249.4 294.9,257.0 301.9,253.9 289.2,246.3" fill="#7e7a6f" stroke="#24221f" stroke-width="0.45" stroke-linejoin="round"/>
<polygon points="294.7,265.5 309.7,274.5 310.7,266.5 297.8,258.7" fill="#8d8d88" stroke="#24221f" stroke-width="0.45" stroke-linejoin="round"/>
<polygon points="309.7,274.5 320.8,269.7 317.7,263.4 310.7,266.5" fill="#5c5951" stroke="#24221f" stroke-width="0.45" stroke-linejoin="round"/>
<polygon points="297.8,258.7 310.7,266.5 317.7,263.4 304.8,255.7" fill="#7e7a6f" stroke="#24221f" stroke-width="0.45" stroke-linejoin="round"/>
<polygon points="320.0,286.9 332.6,294.5 333.6,286.5 323.1,280.1" fill="#8d8d88" stroke="#24221f" stroke-width="0.45" stroke-linejoin="round"/>
<polygon points="332.6,294.5 348.7,287.6 345.6,281.3 333.6,286.5" fill="#5c5951" stroke="#24221f" stroke-width="0.45" stroke-linejoin="round"/>
<polygon points="323.1,280.1 333.6,286.5 345.6,281.3 335.0,275.0" fill="#7e7a6f" stroke="#24221f" stroke-width="0.45" stroke-linejoin="round"/>
<polygon points="216.9,229.9 223.5,234.0 224.6,226.6 219.7,223.6" fill="#8d8d88" stroke="#24221f" stroke-width="0.45" stroke-linejoin="round"/>
<polygon points="223.5,234.0 234.3,229.3 231.5,223.6 224.6,226.6" fill="#5c5951" stroke="#24221f" stroke-width="0.45" stroke-linejoin="round"/>
<polygon points="219.7,223.6 224.6,226.6 231.5,223.6 226.6,220.6" fill="#7e7a6f" stroke="#24221f" stroke-width="0.45" stroke-linejoin="round"/>
<polygon points="223.9,234.3 230.7,238.4 231.7,230.9 226.8,228.0" fill="#8d8d88" stroke="#24221f" stroke-width="0.45" stroke-linejoin="round"/>
<polygon points="230.7,238.4 241.5,233.6 238.6,227.9 231.7,230.9" fill="#5c5951" stroke="#24221f" stroke-width="0.45" stroke-linejoin="round"/>
<polygon points="226.8,228.0 231.7,230.9 238.6,227.9 233.8,224.9" fill="#7e7a6f" stroke="#24221f" stroke-width="0.45" stroke-linejoin="round"/>
<polygon points="231.1,238.6 237.9,242.8 239.0,235.3 234.0,232.3" fill="#8d8d88" stroke="#24221f" stroke-width="0.45" stroke-linejoin="round"/>
<polygon points="237.9,242.8 248.8,238.0 245.9,232.3 239.0,235.3" fill="#5c5951" stroke="#24221f" stroke-width="0.45" stroke-linejoin="round"/>
<polygon points="234.0,232.3 239.0,235.3 245.9,232.3 241.0,229.3" fill="#7e7a6f" stroke="#24221f" stroke-width="0.45" stroke-linejoin="round"/>
<polygon points="238.4,243.0 245.2,247.2 246.3,239.8 241.3,236.7" fill="#8d8d88" stroke="#24221f" stroke-width="0.45" stroke-linejoin="round"/>
<polygon points="245.2,247.2 256.2,242.5 253.3,236.7 246.3,239.8" fill="#5c5951" stroke="#24221f" stroke-width="0.45" stroke-linejoin="round"/>
<polygon points="241.3,236.7 246.3,239.8 253.3,236.7 248.3,233.7" fill="#7e7a6f" stroke="#24221f" stroke-width="0.45" stroke-linejoin="round"/>
<polygon points="245.7,247.5 252.7,251.7 253.7,244.3 248.6,241.2" fill="#8d8d88" stroke="#24221f" stroke-width="0.45" stroke-linejoin="round"/>
<polygon points="252.7,251.7 263.7,247.0 260.7,241.2 253.7,244.3" fill="#5c5951" stroke="#24221f" stroke-width="0.45" stroke-linejoin="round"/>
<polygon points="248.6,241.2 253.7,244.3 260.7,241.2 255.6,238.2" fill="#7e7a6f" stroke="#24221f" stroke-width="0.45" stroke-linejoin="round"/>
<polygon points="253.1,252.0 260.2,256.3 261.2,248.8 256.1,245.7" fill="#8d8d88" stroke="#24221f" stroke-width="0.45" stroke-linejoin="round"/>
<polygon points="260.2,256.3 271.2,251.5 268.2,245.8 261.2,248.8" fill="#5c5951" stroke="#24221f" stroke-width="0.45" stroke-linejoin="round"/>
<polygon points="256.1,245.7 261.2,248.8 268.2,245.8 263.1,242.7" fill="#7e7a6f" stroke="#24221f" stroke-width="0.45" stroke-linejoin="round"/>
<polygon points="260.6,256.6 267.7,260.9 268.8,253.4 263.6,250.3" fill="#8d8d88" stroke="#24221f" stroke-width="0.45" stroke-linejoin="round"/>
<polygon points="267.7,260.9 278.8,256.1 275.9,250.4 268.8,253.4" fill="#5c5951" stroke="#24221f" stroke-width="0.45" stroke-linejoin="round"/>
<polygon points="263.6,250.3 268.8,253.4 275.9,250.4 270.7,247.2" fill="#7e7a6f" stroke="#24221f" stroke-width="0.45" stroke-linejoin="round"/>
<polygon points="268.2,261.2 275.4,265.6 276.4,258.1 271.2,254.9" fill="#8d8d88" stroke="#24221f" stroke-width="0.45" stroke-linejoin="round"/>
<polygon points="275.4,265.6 286.6,260.8 283.6,255.0 276.4,258.1" fill="#5c5951" stroke="#24221f" stroke-width="0.45" stroke-linejoin="round"/>
<polygon points="271.2,254.9 276.4,258.1 283.6,255.0 278.3,251.8" fill="#7e7a6f" stroke="#24221f" stroke-width="0.45" stroke-linejoin="round"/>
<polygon points="275.9,265.9 283.2,270.3 284.2,262.8 278.9,259.6" fill="#8d8d88" stroke="#24221f" stroke-width="0.45" stroke-linejoin="round"/>
<polygon points="283.2,270.3 294.4,265.5 291.3,259.7 284.2,262.8" fill="#5c5951" stroke="#24221f" stroke-width="0.45" stroke-linejoin="round"/>
<polygon points="278.9,259.6 284.2,262.8 291.3,259.7 286.0,256.5" fill="#7e7a6f" stroke="#24221f" stroke-width="0.45" stroke-linejoin="round"/>
<polygon points="333.8,296.6 342.5,301.8 343.5,294.8 337.0,290.8" fill="#8d8d88" stroke="#24221f" stroke-width="0.45" stroke-linejoin="round"/>
<polygon points="342.5,301.8 353.9,296.9 350.8,291.6 343.5,294.8" fill="#5c5951" stroke="#24221f" stroke-width="0.45" stroke-linejoin="round"/>
<polygon points="337.0,290.8 343.5,294.8 350.8,291.6 344.3,287.7" fill="#7e7a6f" stroke="#24221f" stroke-width="0.45" stroke-linejoin="round"/>
<polygon points="283.6,270.6 291.0,275.1 292.0,267.6 286.7,264.3" fill="#8d8d88" stroke="#24221f" stroke-width="0.45" stroke-linejoin="round"/>
<polygon points="291.0,275.1 302.2,270.2 299.2,264.5 292.0,267.6" fill="#5c5951" stroke="#24221f" stroke-width="0.45" stroke-linejoin="round"/>
<polygon points="286.7,264.3 292.0,267.6 299.2,264.5 293.8,261.2" fill="#7e7a6f" stroke="#24221f" stroke-width="0.45" stroke-linejoin="round"/>
<polygon points="291.5,275.4 299.0,279.9 300.0,272.4 294.6,269.1" fill="#8d8d88" stroke="#24221f" stroke-width="0.45" stroke-linejoin="round"/>
<polygon points="299.0,279.9 310.2,275.0 307.2,269.3 300.0,272.4" fill="#5c5951" stroke="#24221f" stroke-width="0.45" stroke-linejoin="round"/>
<polygon points="294.6,269.1 300.0,272.4 307.2,269.3 301.7,266.0" fill="#7e7a6f" stroke="#24221f" stroke-width="0.45" stroke-linejoin="round"/>
<polygon points="342.8,302.7 351.6,308.0 352.6,300.9 346.0,296.9" fill="#8d8d88" stroke="#24221f" stroke-width="0.45" stroke-linejoin="round"/>
<polygon points="351.6,308.0 363.1,303.0 359.9,297.7 352.6,300.9" fill="#5c5951" stroke="#24221f" stroke-width="0.45" stroke-linejoin="round"/>
<polygon points="346.0,296.9 352.6,300.9 359.9,297.7 353.3,293.7" fill="#7e7a6f" stroke="#24221f" stroke-width="0.45" stroke-linejoin="round"/>
<polygon points="299.4,280.2 307.0,284.8 308.0,277.3 302.5,273.9" fill="#8d8d88" stroke="#24221f" stroke-width="0.45" stroke-linejoin="round"/>
<polygon points="307.0,284.8 318.3,279.9 315.2,274.1 308.0,277.3" fill="#5c5951" stroke="#24221f" stroke-width="0.45" stroke-linejoin="round"/>
<polygon points="302.5,273.9 308.0,277.3 315.2,274.1 309.7,270.8" fill="#7e7a6f" stroke="#24221f" stroke-width="0.45" stroke-linejoin="round"/>
<polygon points="307.4,285.1 315.1,289.7 316.1,282.2 310.6,278.8" fill="#8d8d88" stroke="#24221f" stroke-width="0.45" stroke-linejoin="round"/>
<polygon points="315.1,289.7 326.4,284.8 323.3,279.0 316.1,282.2" fill="#5c5951" stroke="#24221f" stroke-width="0.45" stroke-linejoin="round"/>
<polygon points="310.6,278.8 316.1,282.2 323.3,279.0 317.8,275.7" fill="#7e7a6f" stroke="#24221f" stroke-width="0.45" stroke-linejoin="round"/>
<polygon points="208.3,237.0 215.0,241.1 216.0,233.6 211.2,230.7" fill="#8d8d88" stroke="#24221f" stroke-width="0.45" stroke-linejoin="round"/>
<polygon points="215.0,241.1 226.0,236.3 223.1,230.5 216.0,233.6" fill="#5c5951" stroke="#24221f" stroke-width="0.45" stroke-linejoin="round"/>
<polygon points="211.2,230.7 216.0,233.6 223.1,230.5 218.3,227.6" fill="#7e7a6f" stroke="#24221f" stroke-width="0.45" stroke-linejoin="round"/>
<polygon points="215.4,241.3 222.1,245.5 223.2,238.0 218.3,235.0" fill="#8d8d88" stroke="#24221f" stroke-width="0.45" stroke-linejoin="round"/>
<polygon points="222.1,245.5 233.2,240.6 230.3,234.9 223.2,238.0" fill="#5c5951" stroke="#24221f" stroke-width="0.45" stroke-linejoin="round"/>
<polygon points="218.3,235.0 223.2,238.0 230.3,234.9 225.4,231.9" fill="#7e7a6f" stroke="#24221f" stroke-width="0.45" stroke-linejoin="round"/>
<polygon points="222.5,245.7 229.3,249.9 230.4,242.5 225.5,239.4" fill="#8d8d88" stroke="#24221f" stroke-width="0.45" stroke-linejoin="round"/>
<polygon points="229.3,249.9 240.5,245.1 237.5,239.4 230.4,242.5" fill="#5c5951" stroke="#24221f" stroke-width="0.45" stroke-linejoin="round"/>
<polygon points="225.5,239.4 230.4,242.5 237.5,239.4 232.6,236.3" fill="#7e7a6f" stroke="#24221f" stroke-width="0.45" stroke-linejoin="round"/>
<polygon points="229.8,250.2 236.7,254.4 237.7,247.0 232.8,243.9" fill="#8d8d88" stroke="#24221f" stroke-width="0.45" stroke-linejoin="round"/>
<polygon points="236.7,254.4 247.9,249.6 244.9,243.8 237.7,247.0" fill="#5c5951" stroke="#24221f" stroke-width="0.45" stroke-linejoin="round"/>
<polygon points="232.8,243.9 237.7,247.0 244.9,243.8 239.9,240.8" fill="#7e7a6f" stroke="#24221f" stroke-width="0.45" stroke-linejoin="round"/>
<polygon points="237.1,254.7 244.1,259.0 245.2,251.5 240.1,248.4" fill="#8d8d88" stroke="#24221f" stroke-width="0.45" stroke-linejoin="round"/>
<polygon points="244.1,259.0 255.3,254.1 252.3,248.4 245.2,251.5" fill="#5c5951" stroke="#24221f" stroke-width="0.45" stroke-linejoin="round"/>
<polygon points="240.1,248.4 245.2,251.5 252.3,248.4 247.3,245.3" fill="#7e7a6f" stroke="#24221f" stroke-width="0.45" stroke-linejoin="round"/>
<polygon points="244.5,259.3 251.6,263.6 252.6,256.1 247.5,253.0" fill="#8d8d88" stroke="#24221f" stroke-width="0.45" stroke-linejoin="round"/>
<polygon points="251.6,263.6 262.9,258.7 259.8,253.0 252.6,256.1" fill="#5c5951" stroke="#24221f" stroke-width="0.45" stroke-linejoin="round"/>
<polygon points="247.5,253.0 252.6,256.1 259.8,253.0 254.7,249.8" fill="#7e7a6f" stroke="#24221f" stroke-width="0.45" stroke-linejoin="round"/>
<polygon points="252.0,263.9 259.2,268.3 260.2,260.7 255.1,257.6" fill="#8d8d88" stroke="#24221f" stroke-width="0.45" stroke-linejoin="round"/>
<polygon points="259.2,268.3 270.5,263.3 267.4,257.6 260.2,260.7" fill="#5c5951" stroke="#24221f" stroke-width="0.45" stroke-linejoin="round"/>
<polygon points="255.1,257.6 260.2,260.7 267.4,257.6 262.3,254.4" fill="#7e7a6f" stroke="#24221f" stroke-width="0.45" stroke-linejoin="round"/>
<polygon points="259.6,268.5 266.8,273.0 267.9,265.4 262.7,262.2" fill="#8d8d88" stroke="#24221f" stroke-width="0.45" stroke-linejoin="round"/>
<polygon points="266.8,273.0 278.2,268.0 275.1,262.3 267.9,265.4" fill="#5c5951" stroke="#24221f" stroke-width="0.45" stroke-linejoin="round"/>
<polygon points="262.7,262.2 267.9,265.4 275.1,262.3 269.9,259.1" fill="#7e7a6f" stroke="#24221f" stroke-width="0.45" stroke-linejoin="round"/>
<polygon points="267.3,273.2 274.6,277.7 275.6,270.2 270.4,267.0" fill="#8d8d88" stroke="#24221f" stroke-width="0.45" stroke-linejoin="round"/>
<polygon points="274.6,277.7 286.0,272.8 282.9,267.0 275.6,270.2" fill="#5c5951" stroke="#24221f" stroke-width="0.45" stroke-linejoin="round"/>
<polygon points="270.4,267.0 275.6,270.2 282.9,267.0 277.6,263.8" fill="#7e7a6f" stroke="#24221f" stroke-width="0.45" stroke-linejoin="round"/>
<polygon points="275.0,278.0 282.4,282.5 283.5,275.0 278.1,271.7" fill="#8d8d88" stroke="#24221f" stroke-width="0.45" stroke-linejoin="round"/>
<polygon points="282.4,282.5 293.9,277.6 290.8,271.8 283.5,275.0" fill="#5c5951" stroke="#24221f" stroke-width="0.45" stroke-linejoin="round"/>
<polygon points="278.1,271.7 283.5,275.0 290.8,271.8 285.4,268.6" fill="#7e7a6f" stroke="#24221f" stroke-width="0.45" stroke-linejoin="round"/>
<polygon points="282.9,282.8 290.3,287.4 291.4,279.9 286.0,276.6" fill="#8d8d88" stroke="#24221f" stroke-width="0.45" stroke-linejoin="round"/>
<polygon points="290.3,287.4 301.8,282.4 298.7,276.7 291.4,279.9" fill="#5c5951" stroke="#24221f" stroke-width="0.45" stroke-linejoin="round"/>
<polygon points="286.0,276.6 291.4,279.9 298.7,276.7 293.3,273.4" fill="#7e7a6f" stroke="#24221f" stroke-width="0.45" stroke-linejoin="round"/>
<polygon points="322.4,303.7 331.0,309.0 332.1,301.9 325.6,298.0" fill="#8d8d88" stroke="#24221f" stroke-width="0.45" stroke-linejoin="round"/>
<polygon points="331.0,309.0 342.7,304.0 339.5,298.7 332.1,301.9" fill="#5c5951" stroke="#24221f" stroke-width="0.45" stroke-linejoin="round"/>
<polygon points="325.6,298.0 332.1,301.9 339.5,298.7 333.0,294.7" fill="#7e7a6f" stroke="#24221f" stroke-width="0.45" stroke-linejoin="round"/>
<polygon points="290.8,287.7 298.3,292.3 299.4,284.8 293.9,281.4" fill="#8d8d88" stroke="#24221f" stroke-width="0.45" stroke-linejoin="round"/>
<polygon points="298.3,292.3 309.9,287.3 306.7,281.6 299.4,284.8" fill="#5c5951" stroke="#24221f" stroke-width="0.45" stroke-linejoin="round"/>
<polygon points="293.9,281.4 299.4,284.8 306.7,281.6 301.3,278.2" fill="#7e7a6f" stroke="#24221f" stroke-width="0.45" stroke-linejoin="round"/>
<polygon points="298.8,292.6 306.4,297.3 307.5,289.7 302.0,286.4" fill="#8d8d88" stroke="#24221f" stroke-width="0.45" stroke-linejoin="round"/>
<polygon points="306.4,297.3 318.0,292.3 314.9,286.5 307.5,289.7" fill="#5c5951" stroke="#24221f" stroke-width="0.45" stroke-linejoin="round"/>
<polygon points="302.0,286.4 307.5,289.7 314.9,286.5 309.3,283.2" fill="#7e7a6f" stroke="#24221f" stroke-width="0.45" stroke-linejoin="round"/>
<polygon points="331.3,309.9 340.1,315.2 341.1,308.1 334.5,304.1" fill="#8d8d88" stroke="#24221f" stroke-width="0.45" stroke-linejoin="round"/>
<polygon points="340.1,315.2 351.8,310.1 348.6,304.9 341.1,308.1" fill="#5c5951" stroke="#24221f" stroke-width="0.45" stroke-linejoin="round"/>
<polygon points="334.5,304.1 341.1,308.1 348.6,304.9 342.0,300.9" fill="#7e7a6f" stroke="#24221f" stroke-width="0.45" stroke-linejoin="round"/>
<polygon points="306.9,297.6 314.6,302.3 315.6,294.7 310.1,291.3" fill="#8d8d88" stroke="#24221f" stroke-width="0.45" stroke-linejoin="round"/>
<polygon points="314.6,302.3 326.2,297.3 323.1,291.5 315.6,294.7" fill="#5c5951" stroke="#24221f" stroke-width="0.45" stroke-linejoin="round"/>
<polygon points="310.1,291.3 315.6,294.7 323.1,291.5 317.5,288.1" fill="#7e7a6f" stroke="#24221f" stroke-width="0.45" stroke-linejoin="round"/>
<polygon points="198.1,243.3 204.7,247.4 205.9,239.9 201.1,236.9" fill="#8d8d88" stroke="#24221f" stroke-width="0.45" stroke-linejoin="round"/>
<polygon points="204.7,247.4 216.0,242.5 213.1,236.8 205.9,239.9" fill="#5c5951" stroke="#24221f" stroke-width="0.45" stroke-linejoin="round"/>
<polygon points="201.1,236.9 205.9,239.9 213.1,236.8 208.3,233.8" fill="#7e7a6f" stroke="#24221f" stroke-width="0.45" stroke-linejoin="round"/>
<polygon points="205.2,247.6 211.9,251.8 213.0,244.3 208.1,241.3" fill="#8d8d88" stroke="#24221f" stroke-width="0.45" stroke-linejoin="round"/>
<polygon points="211.9,251.8 223.2,246.9 220.2,241.2 213.0,244.3" fill="#5c5951" stroke="#24221f" stroke-width="0.45" stroke-linejoin="round"/>
<polygon points="208.1,241.3 213.0,244.3 220.2,241.2 215.3,238.2" fill="#7e7a6f" stroke="#24221f" stroke-width="0.45" stroke-linejoin="round"/>
<polygon points="212.3,252.1 219.1,256.3 220.2,248.8 215.3,245.8" fill="#8d8d88" stroke="#24221f" stroke-width="0.45" stroke-linejoin="round"/>
<polygon points="219.1,256.3 230.4,251.4 227.5,245.7 220.2,248.8" fill="#5c5951" stroke="#24221f" stroke-width="0.45" stroke-linejoin="round"/>
<polygon points="215.3,245.8 220.2,248.8 227.5,245.7 222.5,242.6" fill="#7e7a6f" stroke="#24221f" stroke-width="0.45" stroke-linejoin="round"/>
<polygon points="219.5,256.6 226.4,260.8 227.5,253.3 222.5,250.3" fill="#8d8d88" stroke="#24221f" stroke-width="0.45" stroke-linejoin="round"/>
<polygon points="226.4,260.8 237.8,255.9 234.8,250.2 227.5,253.3" fill="#5c5951" stroke="#24221f" stroke-width="0.45" stroke-linejoin="round"/>
<polygon points="222.5,250.3 227.5,253.3 234.8,250.2 229.8,247.1" fill="#7e7a6f" stroke="#24221f" stroke-width="0.45" stroke-linejoin="round"/>
<polygon points="226.8,261.1 233.8,265.4 234.9,257.9 229.8,254.8" fill="#8d8d88" stroke="#24221f" stroke-width="0.45" stroke-linejoin="round"/>
<polygon points="233.8,265.4 245.2,260.4 242.2,254.7 234.9,257.9" fill="#5c5951" stroke="#24221f" stroke-width="0.45" stroke-linejoin="round"/>
<polygon points="229.8,254.8 234.9,257.9 242.2,254.7 237.1,251.6" fill="#7e7a6f" stroke="#24221f" stroke-width="0.45" stroke-linejoin="round"/>
<polygon points="234.2,265.7 241.2,270.1 242.3,262.6 237.3,259.4" fill="#8d8d88" stroke="#24221f" stroke-width="0.45" stroke-linejoin="round"/>
<polygon points="241.2,270.1 252.7,265.1 249.7,259.4 242.3,262.6" fill="#5c5951" stroke="#24221f" stroke-width="0.45" stroke-linejoin="round"/>
<polygon points="237.3,259.4 242.3,262.6 249.7,259.4 244.6,256.2" fill="#7e7a6f" stroke="#24221f" stroke-width="0.45" stroke-linejoin="round"/>
<polygon points="241.7,270.4 248.8,274.8 249.9,267.2 244.7,264.0" fill="#8d8d88" stroke="#24221f" stroke-width="0.45" stroke-linejoin="round"/>
<polygon points="248.8,274.8 260.3,269.7 257.3,264.0 249.9,267.2" fill="#5c5951" stroke="#24221f" stroke-width="0.45" stroke-linejoin="round"/>
<polygon points="244.7,264.0 249.9,267.2 257.3,264.0 252.1,260.9" fill="#7e7a6f" stroke="#24221f" stroke-width="0.45" stroke-linejoin="round"/>
<polygon points="249.2,275.0 256.4,279.5 257.5,272.0 252.3,268.7" fill="#8d8d88" stroke="#24221f" stroke-width="0.45" stroke-linejoin="round"/>
<polygon points="256.4,279.5 268.0,274.5 264.9,268.8 257.5,272.0" fill="#5c5951" stroke="#24221f" stroke-width="0.45" stroke-linejoin="round"/>
<polygon points="252.3,268.7 257.5,272.0 264.9,268.8 259.7,265.5" fill="#7e7a6f" stroke="#24221f" stroke-width="0.45" stroke-linejoin="round"/>
<polygon points="256.9,279.8 264.1,284.3 265.3,276.8 260.0,273.5" fill="#8d8d88" stroke="#24221f" stroke-width="0.45" stroke-linejoin="round"/>
<polygon points="264.1,284.3 275.8,279.2 272.7,273.5 265.3,276.8" fill="#5c5951" stroke="#24221f" stroke-width="0.45" stroke-linejoin="round"/>
<polygon points="260.0,273.5 265.3,276.8 272.7,273.5 267.4,270.3" fill="#7e7a6f" stroke="#24221f" stroke-width="0.45" stroke-linejoin="round"/>
<polygon points="264.6,284.6 272.0,289.2 273.1,281.6 267.7,278.3" fill="#8d8d88" stroke="#24221f" stroke-width="0.45" stroke-linejoin="round"/>
<polygon points="272.0,289.2 283.6,284.1 280.5,278.4 273.1,281.6" fill="#5c5951" stroke="#24221f" stroke-width="0.45" stroke-linejoin="round"/>
<polygon points="267.7,278.3 273.1,281.6 280.5,278.4 275.2,275.1" fill="#7e7a6f" stroke="#24221f" stroke-width="0.45" stroke-linejoin="round"/>
<polygon points="272.4,289.4 279.8,294.1 280.9,286.5 275.6,283.2" fill="#8d8d88" stroke="#24221f" stroke-width="0.45" stroke-linejoin="round"/>
<polygon points="279.8,294.1 291.6,289.0 288.4,283.2 280.9,286.5" fill="#5c5951" stroke="#24221f" stroke-width="0.45" stroke-linejoin="round"/>
<polygon points="275.6,283.2 280.9,286.5 288.4,283.2 283.0,279.9" fill="#7e7a6f" stroke="#24221f" stroke-width="0.45" stroke-linejoin="round"/>
<polygon points="280.3,294.4 287.8,299.0 288.9,291.4 283.5,288.1" fill="#8d8d88" stroke="#24221f" stroke-width="0.45" stroke-linejoin="round"/>
<polygon points="287.8,299.0 299.6,293.9 296.4,288.2 288.9,291.4" fill="#5c5951" stroke="#24221f" stroke-width="0.45" stroke-linejoin="round"/>
<polygon points="283.5,288.1 288.9,291.4 296.4,288.2 291.0,284.8" fill="#7e7a6f" stroke="#24221f" stroke-width="0.45" stroke-linejoin="round"/>
<polygon points="288.7,299.6 303.2,308.6 304.3,301.0 291.9,293.3" fill="#8d8d88" stroke="#24221f" stroke-width="0.45" stroke-linejoin="round"/>
<polygon points="303.2,308.6 315.1,303.4 311.9,297.7 304.3,301.0" fill="#5c5951" stroke="#24221f" stroke-width="0.45" stroke-linejoin="round"/>
<polygon points="291.9,293.3 304.3,301.0 311.9,297.7 299.4,290.0" fill="#7e7a6f" stroke="#24221f" stroke-width="0.45" stroke-linejoin="round"/>
<polygon points="185.9,248.6 196.7,255.4 197.9,247.9 188.9,242.2" fill="#8d8d88" stroke="#24221f" stroke-width="0.45" stroke-linejoin="round"/>
<polygon points="196.7,255.4 208.3,250.4 205.3,244.7 197.9,247.9" fill="#5c5951" stroke="#24221f" stroke-width="0.45" stroke-linejoin="round"/>
<polygon points="188.9,242.2 197.9,247.9 205.3,244.7 196.2,239.0" fill="#7e7a6f" stroke="#24221f" stroke-width="0.45" stroke-linejoin="round"/>
<polygon points="197.2,255.6 203.9,259.9 205.0,252.4 200.2,249.3" fill="#8d8d88" stroke="#24221f" stroke-width="0.45" stroke-linejoin="round"/>
<polygon points="203.9,259.9 215.4,254.8 212.4,249.1 205.0,252.4" fill="#5c5951" stroke="#24221f" stroke-width="0.45" stroke-linejoin="round"/>
<polygon points="200.2,249.3 205.0,252.4 212.4,249.1 207.5,246.1" fill="#7e7a6f" stroke="#24221f" stroke-width="0.45" stroke-linejoin="round"/>
<polygon points="204.3,260.1 211.1,264.4 212.3,256.9 207.3,253.8" fill="#8d8d88" stroke="#24221f" stroke-width="0.45" stroke-linejoin="round"/>
<polygon points="211.1,264.4 222.7,259.3 219.7,253.7 212.3,256.9" fill="#5c5951" stroke="#24221f" stroke-width="0.45" stroke-linejoin="round"/>
<polygon points="207.3,253.8 212.3,256.9 219.7,253.7 214.7,250.6" fill="#7e7a6f" stroke="#24221f" stroke-width="0.45" stroke-linejoin="round"/>
<polygon points="305.5,315.2 314.6,320.8 315.7,313.7 308.8,309.4" fill="#8d8d88" stroke="#24221f" stroke-width="0.45" stroke-linejoin="round"/>
<polygon points="314.6,320.8 326.6,315.6 323.4,310.3 315.7,313.7" fill="#5c5951" stroke="#24221f" stroke-width="0.45" stroke-linejoin="round"/>
<polygon points="308.8,309.4 315.7,313.7 323.4,310.3 316.4,306.1" fill="#7e7a6f" stroke="#24221f" stroke-width="0.45" stroke-linejoin="round"/>
<polygon points="211.5,264.7 218.4,269.0 219.6,261.5 214.6,258.3" fill="#8d8d88" stroke="#24221f" stroke-width="0.45" stroke-linejoin="round"/>
<polygon points="218.4,269.0 230.1,263.9 227.0,258.2 219.6,261.5" fill="#5c5951" stroke="#24221f" stroke-width="0.45" stroke-linejoin="round"/>
<polygon points="214.6,258.3 219.6,261.5 227.0,258.2 222.0,255.1" fill="#7e7a6f" stroke="#24221f" stroke-width="0.45" stroke-linejoin="round"/>
<polygon points="218.8,269.3 225.8,273.6 226.9,266.1 221.9,262.9" fill="#8d8d88" stroke="#24221f" stroke-width="0.45" stroke-linejoin="round"/>
<polygon points="225.8,273.6 237.5,268.5 234.4,262.8 226.9,266.1" fill="#5c5951" stroke="#24221f" stroke-width="0.45" stroke-linejoin="round"/>
<polygon points="221.9,262.9 226.9,266.1 234.4,262.8 229.4,259.7" fill="#7e7a6f" stroke="#24221f" stroke-width="0.45" stroke-linejoin="round"/>
<polygon points="226.2,273.9 233.2,278.3 234.4,270.8 229.3,267.6" fill="#8d8d88" stroke="#24221f" stroke-width="0.45" stroke-linejoin="round"/>
<polygon points="233.2,278.3 245.0,273.2 241.9,267.5 234.4,270.8" fill="#5c5951" stroke="#24221f" stroke-width="0.45" stroke-linejoin="round"/>
<polygon points="229.3,267.6 234.4,270.8 241.9,267.5 236.8,264.3" fill="#7e7a6f" stroke="#24221f" stroke-width="0.45" stroke-linejoin="round"/>
<polygon points="233.7,278.6 240.8,283.1 242.0,275.5 236.8,272.3" fill="#8d8d88" stroke="#24221f" stroke-width="0.45" stroke-linejoin="round"/>
<polygon points="240.8,283.1 252.6,277.9 249.5,272.2 242.0,275.5" fill="#5c5951" stroke="#24221f" stroke-width="0.45" stroke-linejoin="round"/>
<polygon points="236.8,272.3 242.0,275.5 249.5,272.2 244.3,269.0" fill="#7e7a6f" stroke="#24221f" stroke-width="0.45" stroke-linejoin="round"/>
<polygon points="241.3,283.3 248.5,287.9 249.6,280.3 244.4,277.0" fill="#8d8d88" stroke="#24221f" stroke-width="0.45" stroke-linejoin="round"/>
<polygon points="248.5,287.9 260.3,282.7 257.2,277.0 249.6,280.3" fill="#5c5951" stroke="#24221f" stroke-width="0.45" stroke-linejoin="round"/>
<polygon points="244.4,277.0 249.6,280.3 257.2,277.0 251.9,273.8" fill="#7e7a6f" stroke="#24221f" stroke-width="0.45" stroke-linejoin="round"/>
<polygon points="248.9,288.1 256.2,292.7 257.3,285.1 252.1,281.8" fill="#8d8d88" stroke="#24221f" stroke-width="0.45" stroke-linejoin="round"/>
<polygon points="256.2,292.7 268.1,287.5 264.9,281.8 257.3,285.1" fill="#5c5951" stroke="#24221f" stroke-width="0.45" stroke-linejoin="round"/>
<polygon points="252.1,281.8 257.3,285.1 264.9,281.8 259.6,278.5" fill="#7e7a6f" stroke="#24221f" stroke-width="0.45" stroke-linejoin="round"/>
<polygon points="256.7,293.0 264.0,297.6 265.1,290.0 259.8,286.7" fill="#8d8d88" stroke="#24221f" stroke-width="0.45" stroke-linejoin="round"/>
<polygon points="264.0,297.6 275.9,292.4 272.8,286.7 265.1,290.0" fill="#5c5951" stroke="#24221f" stroke-width="0.45" stroke-linejoin="round"/>
<polygon points="259.8,286.7 265.1,290.0 272.8,286.7 267.4,283.4" fill="#7e7a6f" stroke="#24221f" stroke-width="0.45" stroke-linejoin="round"/>
<polygon points="264.5,297.9 271.9,302.6 273.0,295.0 267.7,291.6" fill="#8d8d88" stroke="#24221f" stroke-width="0.45" stroke-linejoin="round"/>
<polygon points="271.9,302.6 283.9,297.4 280.7,291.6 273.0,295.0" fill="#5c5951" stroke="#24221f" stroke-width="0.45" stroke-linejoin="round"/>
<polygon points="267.7,291.6 273.0,295.0 280.7,291.6 275.3,288.3" fill="#7e7a6f" stroke="#24221f" stroke-width="0.45" stroke-linejoin="round"/>
<polygon points="272.8,303.1 288.8,313.1 289.9,305.5 276.0,296.8" fill="#8d8d88" stroke="#24221f" stroke-width="0.45" stroke-linejoin="round"/>
<polygon points="288.8,313.1 300.8,307.9 297.6,302.2 289.9,305.5" fill="#5c5951" stroke="#24221f" stroke-width="0.45" stroke-linejoin="round"/>
<polygon points="276.0,296.8 289.9,305.5 297.6,302.2 283.6,293.5" fill="#7e7a6f" stroke="#24221f" stroke-width="0.45" stroke-linejoin="round"/>
<polygon points="183.5,260.3 190.1,264.5 191.3,257.0 186.5,254.0" fill="#8d8d88" stroke="#24221f" stroke-width="0.45" stroke-linejoin="round"/>
<polygon points="190.1,264.5 201.9,259.4 198.9,253.7 191.3,257.0" fill="#5c5951" stroke="#24221f" stroke-width="0.45" stroke-linejoin="round"/>
<polygon points="186.5,254.0 191.3,257.0 198.9,253.7 194.0,250.7" fill="#7e7a6f" stroke="#24221f" stroke-width="0.45" stroke-linejoin="round"/>
<polygon points="287.9,317.6 296.9,323.2 298.0,316.1 291.2,311.8" fill="#8d8d88" stroke="#24221f" stroke-width="0.45" stroke-linejoin="round"/>
<polygon points="296.9,323.2 309.1,317.9 305.8,312.7 298.0,316.1" fill="#5c5951" stroke="#24221f" stroke-width="0.45" stroke-linejoin="round"/>
<polygon points="291.2,311.8 298.0,316.1 305.8,312.7 299.0,308.4" fill="#7e7a6f" stroke="#24221f" stroke-width="0.45" stroke-linejoin="round"/>
<polygon points="190.5,264.8 197.3,269.1 198.5,261.6 193.6,258.5" fill="#8d8d88" stroke="#24221f" stroke-width="0.45" stroke-linejoin="round"/>
<polygon points="197.3,269.1 209.1,263.9 206.0,258.3 198.5,261.6" fill="#5c5951" stroke="#24221f" stroke-width="0.45" stroke-linejoin="round"/>
<polygon points="193.6,258.5 198.5,261.6 206.0,258.3 201.1,255.2" fill="#7e7a6f" stroke="#24221f" stroke-width="0.45" stroke-linejoin="round"/>
<polygon points="198.8,268.4 260.4,307.4 262.1,301.1 201.5,262.8" fill="#8d8d88" stroke="#24221f" stroke-width="0.45" stroke-linejoin="round"/>
<polygon points="260.4,307.4 271.3,302.7 268.5,298.3 262.1,301.1" fill="#5c5951" stroke="#24221f" stroke-width="0.45" stroke-linejoin="round"/>
<polygon points="201.5,262.8 262.1,301.1 268.5,298.3 207.8,260.1" fill="#7e7a6f" stroke="#24221f" stroke-width="0.45" stroke-linejoin="round"/>
<polygon points="296.8,326.0 305.8,331.7 307.0,324.5 300.1,320.2" fill="#8d8d88" stroke="#24221f" stroke-width="0.45" stroke-linejoin="round"/>
<polygon points="305.8,331.7 318.2,326.3 314.9,321.1 307.0,324.5" fill="#5c5951" stroke="#24221f" stroke-width="0.45" stroke-linejoin="round"/>
<polygon points="300.1,320.2 307.0,324.5 314.9,321.1 307.9,316.8" fill="#7e7a6f" stroke="#24221f" stroke-width="0.45" stroke-linejoin="round"/>
<polygon points="260.6,309.2 268.1,314.0 269.3,306.3 263.9,302.9" fill="#8d8d88" stroke="#24221f" stroke-width="0.45" stroke-linejoin="round"/>
<polygon points="268.1,314.0 280.3,308.6 277.1,302.9 269.3,306.3" fill="#5c5951" stroke="#24221f" stroke-width="0.45" stroke-linejoin="round"/>
<polygon points="263.9,302.9 269.3,306.3 277.1,302.9 271.6,299.5" fill="#7e7a6f" stroke="#24221f" stroke-width="0.45" stroke-linejoin="round"/>
<polygon points="277.9,328.5 286.9,334.2 288.1,327.0 281.3,322.7" fill="#8d8d88" stroke="#24221f" stroke-width="0.45" stroke-linejoin="round"/>
<polygon points="286.9,334.2 299.4,328.7 296.1,323.5 288.1,327.0" fill="#5c5951" stroke="#24221f" stroke-width="0.45" stroke-linejoin="round"/>
<polygon points="281.3,322.7 288.1,327.0 296.1,323.5 289.2,319.2" fill="#7e7a6f" stroke="#24221f" stroke-width="0.45" stroke-linejoin="round"/>
<path d="M340.8 394.1 L422.4 347.5 L609.2 471.7 L523.2 530.5Z M376.2 403.6 L382.5 396.6 L370.4 388.1 L380.1 382.5 L381.4 380.2 L389.6 375.5 L391.1 373.4 L400.1 368.3 L400.2 365.3 L409.4 360.0 L419.8 367.1 L430.5 359.3 L524.3 421.6 L513.6 428.1 L535.7 443.1 L546.3 436.0 L566.0 448.7 L527.6 472.6 L506.2 484.5 L478.3 466.9 L469.1 471.8Z " fill="#000" fill-rule="evenodd" opacity="0.17" filter="url(#b3)"/>
<path d="M331.6 378.8 L415.2 331.2 L604.8 457.0 L516.7 517.4Z M369.2 388.6 L375.5 381.6 L363.4 373.1 L373.1 367.5 L374.4 365.2 L382.6 360.5 L384.1 358.4 L393.1 353.3 L393.2 350.3 L402.4 345.0 L412.8 352.1 L423.5 344.3 L517.3 406.6 L506.6 413.1 L528.7 428.1 L539.3 421.0 L559.0 433.7 L520.6 457.6 L499.2 469.5 L471.3 451.9 L462.1 456.8Z M541.1 452.9 L563.8 438.6 L586.0 452.9 L564.9 467.2Z M496.3 486.7 L508.8 480.4 L503.7 475.4 L516.2 467.9 L522.6 473.8 L533.7 464.7 L545.0 473.8 L535.0 480.5 L539.9 484.7 L526.3 493.0 L521.2 488.0 L510.1 495.5Z " fill="#4e4b44" fill-rule="evenodd" stroke="#2e2c28" stroke-width="0.3" stroke-linejoin="round"/>
<path d="M331.6 377.9 L415.2 330.4 L604.8 456.0 L516.7 516.3Z M369.1 387.7 L375.4 380.7 L363.3 372.2 L373.0 366.6 L374.4 364.4 L382.6 359.7 L384.1 357.6 L393.0 352.4 L393.2 349.5 L402.4 344.2 L412.8 351.2 L423.4 343.4 L517.3 405.6 L506.6 412.1 L528.7 427.0 L539.3 419.9 L559.0 432.7 L520.6 456.6 L499.2 468.5 L471.3 450.9 L462.0 455.8Z M541.1 451.8 L563.8 437.6 L586.1 451.8 L564.9 466.1Z M496.3 485.7 L508.8 479.4 L503.7 474.3 L516.2 466.9 L522.6 472.7 L533.7 463.6 L545.0 472.7 L535.0 479.4 L539.9 483.6 L526.3 492.0 L521.2 487.0 L510.1 494.5Z " fill="#55524a" fill-rule="evenodd" stroke="#2e2c28" stroke-width="0.3" stroke-linejoin="round"/>
<path d="M332.6 377.2 L415.2 330.2 L603.6 454.8 L516.5 514.3Z M369.0 386.7 L375.4 379.8 L363.3 371.3 L373.0 365.7 L374.3 363.5 L382.5 358.8 L384.0 356.7 L393.0 351.6 L393.1 348.6 L402.4 343.4 L412.7 350.4 L423.4 342.6 L517.3 404.6 L506.6 411.1 L528.7 426.0 L539.3 418.9 L559.0 431.7 L520.6 455.6 L499.2 467.4 L471.2 449.9 L462.0 454.7Z M541.1 450.8 L563.8 436.6 L586.1 450.8 L564.9 465.1Z M496.3 484.6 L508.7 478.3 L503.6 473.3 L516.2 465.8 L522.6 471.7 L533.7 462.6 L545.0 471.7 L535.0 478.4 L539.9 482.6 L526.3 490.9 L521.3 485.9 L510.1 493.4Z " fill="#5a574f" fill-rule="evenodd" stroke="#2e2c28" stroke-width="0.3" stroke-linejoin="round"/>
<path d="M332.5 376.3 L415.2 329.4 L603.7 453.7 L516.5 513.3Z M368.9 385.8 L375.3 378.9 L363.2 370.4 L372.9 364.8 L374.3 362.6 L382.5 357.9 L384.0 355.8 L392.9 350.7 L393.1 347.8 L402.3 342.5 L412.7 349.5 L423.4 341.8 L517.2 403.6 L506.6 410.1 L528.7 425.0 L539.3 417.9 L559.0 430.6 L520.6 454.5 L499.1 466.4 L471.2 448.8 L461.9 453.7Z M541.1 449.7 L563.8 435.6 L586.2 449.8 L565.0 464.0Z M496.2 483.6 L508.7 477.3 L503.6 472.3 L516.2 464.8 L522.6 470.6 L533.7 461.5 L545.1 470.6 L535.1 477.3 L540.0 481.5 L526.3 489.8 L521.3 484.9 L510.1 492.4Z " fill="#5e5b53" fill-rule="evenodd" stroke="#2e2c28" stroke-width="0.3" stroke-linejoin="round"/>
<ellipse cx="518.8" cy="455.7" rx="2.8" ry="2" fill="#6b675c" stroke="#262420" stroke-width=".5"/>
<path d="M333.5 375.5 L415.3 329.3 L602.5 452.5 L516.3 511.3Z M368.9 384.9 L375.2 378.0 L363.1 369.5 L372.9 363.9 L374.2 361.7 L382.4 357.0 L383.9 355.0 L392.9 349.9 L393.0 346.9 L402.3 341.7 L412.7 348.7 L423.3 340.9 L517.2 402.7 L506.5 409.1 L528.7 424.0 L539.3 416.9 L559.0 429.6 L520.5 453.5 L499.1 465.3 L471.1 447.8 L461.9 452.7Z M541.1 448.7 L563.8 434.5 L586.2 448.7 L565.0 463.0Z M496.2 482.5 L508.7 476.2 L503.6 471.2 L516.2 463.7 L522.6 469.6 L533.7 460.5 L545.1 469.6 L535.1 476.3 L540.0 480.5 L526.3 488.8 L521.3 483.8 L510.1 491.3Z " fill="#6b675c" fill-rule="evenodd" stroke="#2e2c28" stroke-width="0.45" stroke-linejoin="round"/>
<ellipse cx="365.2" cy="379.3" rx="1.6" ry="1.1" fill="#9a978f" stroke="#1e1d1a" stroke-width=".5"/>
<ellipse cx="411.5" cy="339.3" rx="1.6" ry="1.1" fill="#9a978f" stroke="#1e1d1a" stroke-width=".5"/>
<ellipse cx="521.2" cy="458.0" rx="1.6" ry="1.1" fill="#9a978f" stroke="#1e1d1a" stroke-width=".5"/>
<polygon points="805.4,262.9 835.3,251.9 896.6,281.7 884.0,288.0" fill="#000" opacity="0.16" filter="url(#b3)"/>
<polygon points="862.0,247.2 884.0,244.0 906.0,253.4 896.6,259.7" fill="#000" opacity="0.13" filter="url(#b3)"/>
<polygon points="803.9,241.2 893.4,279.4 893.4,283.3 804.6,245.6" fill="#77756f" stroke="#2e2c28" stroke-width="0.4" stroke-linejoin="round"/>
<polygon points="893.4,279.4 916.2,261.0 916.2,265.2 893.4,283.3" fill="#56534b" stroke="#2e2c28" stroke-width="0.4" stroke-linejoin="round"/>
<polygon points="803.9,241.2 830.6,224.8 838.8,228.8 828.2,239.0 892.2,268.8 904.4,256.3 916.2,261.0 893.4,279.4" fill="#6c685d" stroke="#2e2c28" stroke-width="0.4" stroke-linejoin="round"/>
<polygon points="819.6,235.4 832.9,228.3 837.2,229.9 837.2,232.2 824.3,239.3 819.9,237.7" fill="#8a877e" stroke="#2e2c28" stroke-width="0.3" stroke-linejoin="round"/>
<polygon points="891.9,266.8 904.4,258.5 911.5,259.4 912.3,262.1 896.6,269.9 892.2,269.2" fill="#8a877e" stroke="#2e2c28" stroke-width="0.3" stroke-linejoin="round"/>
<polygon points="832.9,228.3 837.2,227.0 839.2,229.1 837.2,232.2" fill="#5d5a52" stroke="#2e2c28" stroke-width="0.3" stroke-linejoin="round"/>
<polygon points="904.4,258.5 906.0,255.8 912.3,258.5 911.5,261.6" fill="#7d7a71" stroke="#2e2c28" stroke-width="0.3" stroke-linejoin="round"/>
<polygon points="912.3,261.6 916.2,261.0 916.2,264.8 913.1,266.0" fill="#4a4741" stroke="#2e2c28" stroke-width="0.3" stroke-linejoin="round"/>
<polygon points="862.8,218.9 927.2,243.2 927.2,245.6 862.8,221.2" fill="#56534c" stroke="#2e2c28" stroke-width="0.4" stroke-linejoin="round"/>
<polygon points="862.8,218.9 871.1,214.1 934.3,239.0 927.2,243.2" fill="#77736a" stroke="#2e2c28" stroke-width="0.4" stroke-linejoin="round"/>
<polygon points="864.4,211.3 866.7,210.7 868.6,214.1 865.9,215.1" fill="#6a675e" stroke="#2e2c28" stroke-width="0.3" stroke-linejoin="round"/>
<polygon points="933.5,239.3 940.6,240.6 941.9,242.4 939.8,243.7 933.1,241.8" fill="#6a675e" stroke="#2e2c28" stroke-width="0.3" stroke-linejoin="round"/>
<polygon points="922.5,244.0 928.0,243.4 929.6,245.6 927.2,247.2 923.0,245.9" fill="#4a4741" stroke="#2e2c28" stroke-width="0.3" stroke-linejoin="round"/>
<polygon points="823.7,340.9 872.4,319.6 878.7,323.6 831.6,344.0" fill="#000" opacity="0.12" filter="url(#b3)"/>
<polygon points="820.6,325.9 824.1,327.1 822.1,340.9 818.6,338.9" fill="#7d7b75" stroke="#2e2c28" stroke-width="0.4" stroke-linejoin="round"/>
<polygon points="824.1,327.1 870.9,300.4 870.9,308.6 822.1,340.9" fill="#4e4b45" stroke="#2e2c28" stroke-width="0.4" stroke-linejoin="round"/>
<polygon points="820.6,325.5 870.1,298.0 870.9,300.4 824.1,327.1" fill="#6f6b61" stroke="#2e2c28" stroke-width="0.4" stroke-linejoin="round"/>
<polygon points="827.6,327.5 837.5,323.6 840.2,325.3 830.4,329.2" fill="#6c685d" stroke="#2e2c28" stroke-width="0.3" stroke-linejoin="round"/>
<polygon points="827.6,327.5 830.4,329.2 830.4,335.7 827.6,334.0" fill="#7b7973" stroke="#2e2c28" stroke-width="0.3" stroke-linejoin="round"/>
<polygon points="830.4,329.2 840.2,325.3 840.2,331.8 830.4,335.7" fill="#55524b" stroke="#2e2c28" stroke-width="0.5" stroke-linejoin="round"/>
<polygon points="831.8,330.6 839.6,327.1 839.6,330.1 831.8,334.0" fill="#6f6c64" stroke="#2e2c28" stroke-width="0.7" stroke-linejoin="round"/>
<polygon points="841.8,319.6 852.0,315.3 854.8,317.1 844.5,321.4" fill="#6c685d" stroke="#2e2c28" stroke-width="0.3" stroke-linejoin="round"/>
<polygon points="841.8,319.6 844.5,321.4 844.5,327.9 841.8,326.1" fill="#7b7973" stroke="#2e2c28" stroke-width="0.3" stroke-linejoin="round"/>
<polygon points="844.5,321.4 854.8,317.1 854.8,323.5 844.5,327.9" fill="#55524b" stroke="#2e2c28" stroke-width="0.5" stroke-linejoin="round"/>
<polygon points="846.0,322.8 854.1,318.9 854.1,321.8 846.0,326.1" fill="#6f6c64" stroke="#2e2c28" stroke-width="0.7" stroke-linejoin="round"/>
<polygon points="855.2,311.8 868.5,305.9 872.4,307.6 859.1,313.5" fill="#6c685d" stroke="#2e2c28" stroke-width="0.3" stroke-linejoin="round"/>
<polygon points="855.2,311.8 859.1,313.5 859.1,321.2 855.2,319.4" fill="#7b7973" stroke="#2e2c28" stroke-width="0.3" stroke-linejoin="round"/>
<polygon points="859.1,313.5 872.4,307.6 872.4,315.3 859.1,321.2" fill="#55524b" stroke="#2e2c28" stroke-width="0.5" stroke-linejoin="round"/>
<polygon points="860.5,314.9 871.8,309.4 871.8,313.2 860.5,319.1" fill="#6f6c64" stroke="#2e2c28" stroke-width="0.7" stroke-linejoin="round"/>
<rect x="317.7" y="382.6" width="2.2" height="6" rx=".8" fill="#2b2926"/><rect x="318.2" y="385.0" width="1.2" height="1.6" fill="#6a675f"/>
<rect x="263.9" y="426.8" width="2.2" height="6" rx=".8" fill="#2b2926"/><rect x="264.4" y="429.2" width="1.2" height="1.6" fill="#6a675f"/>
<rect x="419.1" y="515.8" width="2.2" height="6" rx=".8" fill="#2b2926"/><rect x="419.6" y="518.2" width="1.2" height="1.6" fill="#6a675f"/>
<ellipse cx="988" cy="128" rx="17" ry="7" fill="#000" opacity=".13" filter="url(#b3)"/>
<polygon points="968.2,99.3 987.0,91.8 1004.7,99.8 985.4,108.4" fill="#eeeeee" stroke="#b9b9b9" stroke-width="0.6" stroke-linejoin="round" stroke-dasharray="2.2 1.2"/>
<polygon points="968.2,99.3 985.4,108.4 985.4,130.4 969.3,120.2" fill="#e6e6e6" stroke="#b9b9b9" stroke-width="0.6" stroke-linejoin="round" stroke-dasharray="2.2 1.2"/>
<polygon points="985.4,108.4 1004.7,99.8 1003.0,121.3 985.4,130.4" fill="#dedede" stroke="#b9b9b9" stroke-width="0.6" stroke-linejoin="round" stroke-dasharray="2.2 1.2"/>
<line x1="967.1" y1="95.5" x2="969.3" y2="120.2" stroke="#7b7bf0" stroke-width="1"/><line x1="969.3" y1="120.2" x2="988.6" y2="134.7" stroke="#ee8080" stroke-width="1"/>
<g font-family="'Liberation Sans','Noto Sans CJK JP',sans-serif" fill="#8d8d8d"><text x="963.6" y="93.8" font-size="6.4" fill="#6a6af0">Z</text><text x="988.4" y="139.4" font-size="5.6" fill="#ee7070">X</text><text transform="matrix(.95 .38 -.9 .38 985.2 103.4)" font-size="9.5" text-anchor="middle">上</text><text transform="matrix(.85 .48 0 1 977 119.6)" font-size="10.5" text-anchor="middle">前</text><text transform="matrix(.9 -.42 0 1 994.6 119.6)" font-size="10.5" text-anchor="middle">右</text></g>
</svg>
</div>
<div id="bottombar" class="abs"><div id="bottomlight" class="abs"></div></div>
<svg id="ui" class="abs" width="1024" height="560" viewBox="0 0 1024 560">
<g id="browser">
<rect x="3.0" y="79.6" width="158.5" height="11.6" fill="#f1f1f1" rx="1" stroke="#dcdcdc" stroke-width="0.6"/>
<path d="M6.8 85.6l2.6-1.9v3.8zM9.8 85.6l2.6-1.9v3.8z" fill="#333"/>
<text x="15.5" y="87.7" font-size="5.6" fill="#333" font-weight="400" text-anchor="start" textLength="17.0" lengthAdjust="spacingAndGlyphs">ブラウザ</text>
<circle cx="152.4" cy="85.6" r="1.9" fill="#222"/><rect x="151.2" y="85.3" width="2.4" height=".6" fill="#fff"/>
<rect x="159.0" y="83.0" width="1.0" height="5.4" fill="#bbb"/>
<rect x="4.2" y="95.0" width="2.4" height="433.0" fill="#d3d3d3"/>
<rect x="4.2" y="95.0" width="2.4" height="126.5" fill="#a3a3a3"/>
<rect x="21.0" y="95.3" width="85.0" height="9.9" fill="#f0f0f0"/>
<path d="M11.0 103.1l5.2 0l0 -5.2z" fill="#666" stroke="#333" stroke-width="0.6"/>
<path d="M23.3 100.5q4.2 -4.8 8.4 0q-4.2 4.8 -8.4 0z" fill="#8f8f8f"/>
<circle cx="27.5" cy="100.5" r="1.75" fill="none" stroke="#dcdcdc" stroke-width=".65"/>
<circle cx="27.5" cy="100.5" r=".8" fill="#6e6e6e"/>
<rect x="34.5" y="96.0" width="58.5" height="8.6" fill="#8f8f8f"/>
<rect x="36.2" y="96.4" width="7.4" height="7.8" fill="#fdfdfd" rx="1.6" stroke="#6e7686" stroke-width="0.7"/>
<rect x="38.2" y="99.0" width="3.4" height="3.8" fill="#cfd3da" rx="0.5"/>
<text x="52.0" y="102.7" font-size="6" fill="#fff" font-weight="bold" text-anchor="start" textLength="34.5" lengthAdjust="spacingAndGlyphs">HX-10DP v24</text>
<circle cx="98.6" cy="100.5" r="2.9" fill="#fff" stroke="#333" stroke-width=".8"/><circle cx="98.6" cy="100.5" r="1.1" fill="#222"/>
<rect x="31.0" y="107.8" width="64.5" height="9.8" fill="#f1f1f1" opacity="0.92"/>
<path d="M21.3 109.6l4.6 3.1l-4.6 3.1z" fill="#fff" stroke="#444" stroke-width="0.8"/>
<g stroke="#8a8a8a" stroke-width="1.5"><line x1="38.70" y1="112.70" x2="40.60" y2="112.70"/><line x1="38.06" y1="114.26" x2="39.40" y2="115.60"/><line x1="36.50" y1="114.90" x2="36.50" y2="116.80"/><line x1="34.94" y1="114.26" x2="33.60" y2="115.60"/><line x1="34.30" y1="112.70" x2="32.40" y2="112.70"/><line x1="34.94" y1="111.14" x2="33.60" y2="109.80"/><line x1="36.50" y1="110.50" x2="36.50" y2="108.60"/><line x1="38.06" y1="111.14" x2="39.40" y2="109.80"/></g>
<circle cx="36.5" cy="112.7" r="2.3" fill="#fff" stroke="#8a8a8a" stroke-width="1.5"/>
<text x="48.5" y="114.9" font-size="6.2" fill="#1c1c1c" font-weight="400" text-anchor="start" textLength="41.0" lengthAdjust="spacingAndGlyphs">ドキュメントの設定</text>
<rect x="31.0" y="120.5" width="47.3" height="9.8" fill="#f1f1f1" opacity="0.92"/>
<path d="M21.3 122.3l4.6 3.1l-4.6 3.1z" fill="#fff" stroke="#444" stroke-width="0.8"/>
<path d="M32.4 121.8h3.2l.8 .9h4.4v6h-8.4z" fill="#8d8d8d"/>
<path d="M32.4 123.8h8.4" fill="none" stroke="#b5b5b5" stroke-width="0.5"/>
<text x="47.3" y="127.6" font-size="6.2" fill="#1c1c1c" font-weight="400" text-anchor="start" textLength="25.0" lengthAdjust="spacingAndGlyphs">ビュー管理</text>
<rect x="31.0" y="133.3" width="47.5" height="9.8" fill="#f1f1f1" opacity="0.92"/>
<path d="M21.3 135.1l4.6 3.1l-4.6 3.1z" fill="#fff" stroke="#444" stroke-width="0.8"/>
<path d="M32.4 138.2q4.2 -4.8 8.4 0q-4.2 4.8 -8.4 0z" fill="#f4f4f4" stroke="#d2d2d2" stroke-width="0.7"/>
<circle cx="36.6" cy="138.2" r="1.5" fill="none" stroke="#d6d6d6" stroke-width=".6"/>
<path d="M46.0 134.6h3.2l.8 .9h4.4v6h-8.4z" fill="#8d8d8d"/>
<path d="M46.0 136.6h8.4" fill="none" stroke="#b5b5b5" stroke-width="0.5"/>
<text x="61.0" y="140.4" font-size="6.2" fill="#1c1c1c" font-weight="400" text-anchor="start" textLength="12.0" lengthAdjust="spacingAndGlyphs">原点</text>
<rect x="31.0" y="146.0" width="47.5" height="9.8" fill="#f1f1f1" opacity="0.92"/>
<path d="M21.0 153.5l5.2 0l0 -5.2z" fill="#666" stroke="#333" stroke-width="0.6"/>
<path d="M32.4 150.9q4.2 -4.8 8.4 0q-4.2 4.8 -8.4 0z" fill="#8f8f8f"/>
<circle cx="36.6" cy="150.9" r="1.75" fill="none" stroke="#dcdcdc" stroke-width=".65"/>
<circle cx="36.6" cy="150.9" r=".8" fill="#6e6e6e"/>
<path d="M46.0 147.3h3.2l.8 .9h4.4v6h-8.4z" fill="#8d8d8d"/>
<path d="M46.0 149.3h8.4" fill="none" stroke="#b5b5b5" stroke-width="0.5"/>
<text x="61.0" y="153.1" font-size="6.2" fill="#1c1c1c" font-weight="400" text-anchor="start" textLength="13.0" lengthAdjust="spacingAndGlyphs">ボディ</text>
<rect x="40.5" y="158.7" width="59.5" height="9.8" fill="#f2f2f2" opacity="0.92"/>
<path d="M42.0 163.6q4.2 -4.8 8.4 0q-4.2 4.8 -8.4 0z" fill="#8f8f8f"/>
<circle cx="46.2" cy="163.6" r="1.75" fill="none" stroke="#dcdcdc" stroke-width=".65"/>
<circle cx="46.2" cy="163.6" r=".8" fill="#6e6e6e"/>
<rect x="55.2" y="159.3" width="8.4" height="8.6" fill="#fdfdfd" rx="2" stroke="#6e7686" stroke-width="0.8"/>
<rect x="57.5" y="162.0" width="3.6" height="4.2" fill="#cfd3da" rx="0.6"/>
<text x="71.0" y="165.8" font-size="6.2" fill="#1c1c1c" font-weight="400" text-anchor="start" textLength="23.0" lengthAdjust="spacingAndGlyphs">キーボード</text>
<rect x="40.5" y="171.5" width="50.0" height="9.8" fill="#f2f2f2" opacity="0.92"/>
<path d="M42.0 176.4q4.2 -4.8 8.4 0q-4.2 4.8 -8.4 0z" fill="#8f8f8f"/>
<circle cx="46.2" cy="176.4" r="1.75" fill="none" stroke="#dcdcdc" stroke-width=".65"/>
<circle cx="46.2" cy="176.4" r=".8" fill="#6e6e6e"/>
<rect x="55.2" y="172.1" width="8.4" height="8.6" fill="#fdfdfd" rx="2" stroke="#6e7686" stroke-width="0.8"/>
<rect x="57.5" y="174.8" width="3.6" height="4.2" fill="#cfd3da" rx="0.6"/>
<text x="71.0" y="178.6" font-size="6.2" fill="#1c1c1c" font-weight="400" text-anchor="start" textLength="13.5" lengthAdjust="spacingAndGlyphs">LED3</text>
<rect x="40.5" y="184.2" width="49.5" height="9.8" fill="#f2f2f2" opacity="0.92"/>
<path d="M42.0 189.1q4.2 -4.8 8.4 0q-4.2 4.8 -8.4 0z" fill="#8f8f8f"/>
<circle cx="46.2" cy="189.1" r="1.75" fill="none" stroke="#dcdcdc" stroke-width=".65"/>
<circle cx="46.2" cy="189.1" r=".8" fill="#6e6e6e"/>
<rect x="55.2" y="184.8" width="8.4" height="8.6" fill="#fdfdfd" rx="2" stroke="#6e7686" stroke-width="0.8"/>
<rect x="57.5" y="187.5" width="3.6" height="4.2" fill="#cfd3da" rx="0.6"/>
<text x="71.0" y="191.3" font-size="6.2" fill="#1c1c1c" font-weight="400" text-anchor="start" textLength="13.0" lengthAdjust="spacingAndGlyphs">LED1</text>
<rect x="40.5" y="196.9" width="50.0" height="9.8" fill="#f2f2f2" opacity="0.92"/>
<path d="M42.0 201.8q4.2 -4.8 8.4 0q-4.2 4.8 -8.4 0z" fill="#8f8f8f"/>
<circle cx="46.2" cy="201.8" r="1.75" fill="none" stroke="#dcdcdc" stroke-width=".65"/>
<circle cx="46.2" cy="201.8" r=".8" fill="#6e6e6e"/>
<rect x="55.2" y="197.5" width="8.4" height="8.6" fill="#fdfdfd" rx="2" stroke="#6e7686" stroke-width="0.8"/>
<rect x="57.5" y="200.2" width="3.6" height="4.2" fill="#cfd3da" rx="0.6"/>
<text x="71.0" y="204.0" font-size="6.2" fill="#1c1c1c" font-weight="400" text-anchor="start" textLength="13.5" lengthAdjust="spacingAndGlyphs">LED2</text>
<rect x="40.5" y="209.7" width="76.5" height="9.8" fill="#f2f2f2" opacity="0.92"/>
<path d="M42.0 214.6q4.2 -4.8 8.4 0q-4.2 4.8 -8.4 0z" fill="#8f8f8f"/>
<circle cx="46.2" cy="214.6" r="1.75" fill="none" stroke="#dcdcdc" stroke-width=".65"/>
<circle cx="46.2" cy="214.6" r=".8" fill="#6e6e6e"/>
<rect x="55.2" y="210.3" width="8.4" height="8.6" fill="#fdfdfd" rx="2" stroke="#6e7686" stroke-width="0.8"/>
<rect x="57.5" y="213.0" width="3.6" height="4.2" fill="#cfd3da" rx="0.6"/>
<text x="71.0" y="216.8" font-size="6.2" fill="#1c1c1c" font-weight="400" text-anchor="start" textLength="40.0" lengthAdjust="spacingAndGlyphs">キーボードフレーム</text>
<rect x="40.5" y="222.4" width="82.5" height="9.8" fill="#f2f2f2" opacity="0.92"/>
<path d="M42.0 227.3q4.2 -4.8 8.4 0q-4.2 4.8 -8.4 0z" fill="#8f8f8f"/>
<circle cx="46.2" cy="227.3" r="1.75" fill="none" stroke="#dcdcdc" stroke-width=".65"/>
<circle cx="46.2" cy="227.3" r=".8" fill="#6e6e6e"/>
<rect x="55.2" y="223.0" width="8.4" height="8.6" fill="#fdfdfd" rx="2" stroke="#6e7686" stroke-width="0.8"/>
<rect x="57.5" y="225.7" width="3.6" height="4.2" fill="#cfd3da" rx="0.6"/>
<text x="71.0" y="229.5" font-size="6.2" fill="#1c1c1c" font-weight="400" text-anchor="start" textLength="46.0" lengthAdjust="spacingAndGlyphs">ジョイスティックポート</text>
<rect x="40.5" y="235.2" width="66.5" height="9.8" fill="#f2f2f2" opacity="0.92"/>
<path d="M42.0 240.1q4.2 -4.8 8.4 0q-4.2 4.8 -8.4 0z" fill="#8f8f8f"/>
<circle cx="46.2" cy="240.1" r="1.75" fill="none" stroke="#dcdcdc" stroke-width=".65"/>
<circle cx="46.2" cy="240.1" r=".8" fill="#6e6e6e"/>
<rect x="55.2" y="235.8" width="8.4" height="8.6" fill="#fdfdfd" rx="2" stroke="#6e7686" stroke-width="0.8"/>
<rect x="57.5" y="238.5" width="3.6" height="4.2" fill="#cfd3da" rx="0.6"/>
<text x="71.0" y="242.2" font-size="6.2" fill="#1c1c1c" font-weight="400" text-anchor="start" textLength="30.0" lengthAdjust="spacingAndGlyphs">カートリッジ蓋</text>
<rect x="40.5" y="247.9" width="82.5" height="9.8" fill="#f2f2f2" opacity="0.92"/>
<path d="M42.0 252.8q4.2 -4.8 8.4 0q-4.2 4.8 -8.4 0z" fill="#8f8f8f"/>
<circle cx="46.2" cy="252.8" r="1.75" fill="none" stroke="#dcdcdc" stroke-width=".65"/>
<circle cx="46.2" cy="252.8" r=".8" fill="#6e6e6e"/>
<rect x="55.2" y="248.5" width="8.4" height="8.6" fill="#fdfdfd" rx="2" stroke="#6e7686" stroke-width="0.8"/>
<rect x="57.5" y="251.2" width="3.6" height="4.2" fill="#cfd3da" rx="0.6"/>
<text x="71.0" y="255.0" font-size="6.2" fill="#1c1c1c" font-weight="400" text-anchor="start" textLength="46.0" lengthAdjust="spacingAndGlyphs">カートリッジフレーム</text>
<rect x="40.5" y="260.6" width="60.5" height="9.8" fill="#f2f2f2" opacity="0.92"/>
<path d="M42.0 265.5q4.2 -4.8 8.4 0q-4.2 4.8 -8.4 0z" fill="#8f8f8f"/>
<circle cx="46.2" cy="265.5" r="1.75" fill="none" stroke="#dcdcdc" stroke-width=".65"/>
<circle cx="46.2" cy="265.5" r=".8" fill="#6e6e6e"/>
<rect x="55.2" y="261.2" width="8.4" height="8.6" fill="#fdfdfd" rx="2" stroke="#6e7686" stroke-width="0.8"/>
<rect x="57.5" y="263.9" width="3.6" height="4.2" fill="#cfd3da" rx="0.6"/>
<text x="71.0" y="267.7" font-size="6.2" fill="#1c1c1c" font-weight="400" text-anchor="start" textLength="24.0" lengthAdjust="spacingAndGlyphs">ボディ上面</text>
<rect x="40.5" y="273.4" width="60.5" height="9.8" fill="#f2f2f2" opacity="0.92"/>
<path d="M42.0 278.3q4.2 -4.8 8.4 0q-4.2 4.8 -8.4 0z" fill="#8f8f8f"/>
<circle cx="46.2" cy="278.3" r="1.75" fill="none" stroke="#dcdcdc" stroke-width=".65"/>
<circle cx="46.2" cy="278.3" r=".8" fill="#6e6e6e"/>
<rect x="55.2" y="274.0" width="8.4" height="8.6" fill="#fdfdfd" rx="2" stroke="#6e7686" stroke-width="0.8"/>
<rect x="57.5" y="276.7" width="3.6" height="4.2" fill="#cfd3da" rx="0.6"/>
<text x="71.0" y="280.5" font-size="6.2" fill="#1c1c1c" font-weight="400" text-anchor="start" textLength="24.0" lengthAdjust="spacingAndGlyphs">ボディ底面</text>
<rect x="40.5" y="286.1" width="54.5" height="9.8" fill="#f2f2f2" opacity="0.92"/>
<path d="M42.0 291.0q4.2 -4.8 8.4 0q-4.2 4.8 -8.4 0z" fill="#8f8f8f"/>
<circle cx="46.2" cy="291.0" r="1.75" fill="none" stroke="#dcdcdc" stroke-width=".65"/>
<circle cx="46.2" cy="291.0" r=".8" fill="#6e6e6e"/>
<rect x="55.2" y="286.7" width="8.4" height="8.6" fill="#fdfdfd" rx="2" stroke="#6e7686" stroke-width="0.8"/>
<rect x="57.5" y="289.4" width="3.6" height="4.2" fill="#cfd3da" rx="0.6"/>
<text x="71.0" y="293.2" font-size="6.2" fill="#1c1c1c" font-weight="400" text-anchor="start" textLength="18.0" lengthAdjust="spacingAndGlyphs">スペーサ</text>
<rect x="31.0" y="298.8" width="73.0" height="9.8" fill="#f1f1f1" opacity="0.92"/>
<path d="M21.3 300.6l4.6 3.1l-4.6 3.1z" fill="#fff" stroke="#444" stroke-width="0.8"/>
<path d="M32.4 303.7q4.2 -4.8 8.4 0q-4.2 4.8 -8.4 0z" fill="#8f8f8f"/>
<circle cx="36.6" cy="303.7" r="1.75" fill="none" stroke="#dcdcdc" stroke-width=".65"/>
<circle cx="36.6" cy="303.7" r=".8" fill="#6e6e6e"/>
<path d="M46.0 300.1h3.2l.8 .9h4.4v6h-8.4z" fill="#8d8d8d"/>
<path d="M46.0 302.1h8.4" fill="none" stroke="#b5b5b5" stroke-width="0.5"/>
<text x="61.0" y="305.9" font-size="6.2" fill="#1c1c1c" font-weight="400" text-anchor="start" textLength="38.0" lengthAdjust="spacingAndGlyphs">コンストラクション</text>
<rect x="31.0" y="311.6" width="52.0" height="9.8" fill="#f1f1f1" opacity="0.92"/>
<path d="M32.0 313.9l1.6 -1.2h5.6v6.6l-1.6 1.2h-5.6z" fill="#3f97dc"/>
<path d="M32.0 313.9h5.6v6.6h-5.6z" fill="#5fb0ec"/>
<path d="M40.4 312.7v7.6" fill="none" stroke="#555" stroke-width="0.6"/>
<path d="M32.0 321.0h6.5" fill="none" stroke="#999" stroke-width="0.7"/>
<text x="48.0" y="318.7" font-size="6.2" fill="#1c1c1c" font-weight="400" text-anchor="start" textLength="19.2" lengthAdjust="spacingAndGlyphs">押し出し</text>
<text x="67.5" y="318.7" font-size="6.2" fill="#1c1c1c" font-weight="400" text-anchor="start" textLength="10.4" lengthAdjust="spacingAndGlyphs">455</text>
<rect x="31.0" y="324.3" width="52.0" height="9.8" fill="#f1f1f1" opacity="0.92"/>
<path d="M32.0 326.6l1.6 -1.2h5.6v6.6l-1.6 1.2h-5.6z" fill="#3f97dc"/>
<path d="M32.0 326.6h5.6v6.6h-5.6z" fill="#5fb0ec"/>
<path d="M40.4 325.4v7.6" fill="none" stroke="#555" stroke-width="0.6"/>
<path d="M32.0 333.7h6.5" fill="none" stroke="#999" stroke-width="0.7"/>
<text x="48.0" y="331.4" font-size="6.2" fill="#1c1c1c" font-weight="400" text-anchor="start" textLength="19.2" lengthAdjust="spacingAndGlyphs">押し出し</text>
<text x="67.5" y="331.4" font-size="6.2" fill="#1c1c1c" font-weight="400" text-anchor="start" textLength="10.4" lengthAdjust="spacingAndGlyphs">456</text>
<rect x="31.0" y="337.0" width="43.0" height="9.8" fill="#f1f1f1" opacity="0.92"/>
<path d="M32.0 345.7v-4.5l3-3h3l2.4 4.4l-1.2 3.1z" fill="#f4f4f4" stroke="#777" stroke-width="0.7"/>
<path d="M35.6 339.3l2.6-.6l2 4.6l-1.6 2.4z" fill="#3f97dc"/>
<text x="48.0" y="344.1" font-size="6.2" fill="#1c1c1c" font-weight="400" text-anchor="start" textLength="10.4" lengthAdjust="spacingAndGlyphs">勾配</text>
<text x="59.4" y="344.1" font-size="6.2" fill="#1c1c1c" font-weight="400" text-anchor="start" textLength="10.4" lengthAdjust="spacingAndGlyphs">457</text>
<rect x="31.0" y="349.8" width="52.0" height="9.8" fill="#f1f1f1" opacity="0.92"/>
<path d="M32.0 352.1l1.6 -1.2h5.6v6.6l-1.6 1.2h-5.6z" fill="#3f97dc"/>
<path d="M32.0 352.1h5.6v6.6h-5.6z" fill="#5fb0ec"/>
<path d="M40.4 350.9v7.6" fill="none" stroke="#555" stroke-width="0.6"/>
<path d="M32.0 359.2h6.5" fill="none" stroke="#999" stroke-width="0.7"/>
<text x="48.0" y="356.9" font-size="6.2" fill="#1c1c1c" font-weight="400" text-anchor="start" textLength="19.2" lengthAdjust="spacingAndGlyphs">押し出し</text>
<text x="67.5" y="356.9" font-size="6.2" fill="#1c1c1c" font-weight="400" text-anchor="start" textLength="10.4" lengthAdjust="spacingAndGlyphs">459</text>
<rect x="31.0" y="362.5" width="52.0" height="9.8" fill="#f1f1f1" opacity="0.92"/>
<path d="M32.0 364.8l1.6 -1.2h5.6v6.6l-1.6 1.2h-5.6z" fill="#3f97dc"/>
<path d="M32.0 364.8h5.6v6.6h-5.6z" fill="#5fb0ec"/>
<path d="M40.4 363.6v7.6" fill="none" stroke="#555" stroke-width="0.6"/>
<path d="M32.0 371.9h6.5" fill="none" stroke="#999" stroke-width="0.7"/>
<text x="48.0" y="369.6" font-size="6.2" fill="#1c1c1c" font-weight="400" text-anchor="start" textLength="19.2" lengthAdjust="spacingAndGlyphs">押し出し</text>
<text x="67.5" y="369.6" font-size="6.2" fill="#1c1c1c" font-weight="400" text-anchor="start" textLength="10.4" lengthAdjust="spacingAndGlyphs">482</text>
<rect x="31.0" y="375.2" width="52.0" height="9.8" fill="#f1f1f1" opacity="0.92"/>
<path d="M32.0 377.5l1.6 -1.2h5.6v6.6l-1.6 1.2h-5.6z" fill="#3f97dc"/>
<path d="M32.0 377.5h5.6v6.6h-5.6z" fill="#5fb0ec"/>
<path d="M40.4 376.3v7.6" fill="none" stroke="#555" stroke-width="0.6"/>
<path d="M32.0 384.6h6.5" fill="none" stroke="#999" stroke-width="0.7"/>
<text x="48.0" y="382.3" font-size="6.2" fill="#1c1c1c" font-weight="400" text-anchor="start" textLength="19.2" lengthAdjust="spacingAndGlyphs">押し出し</text>
<text x="67.5" y="382.3" font-size="6.2" fill="#1c1c1c" font-weight="400" text-anchor="start" textLength="10.4" lengthAdjust="spacingAndGlyphs">519</text>
<rect x="31.0" y="388.0" width="52.0" height="9.8" fill="#f1f1f1" opacity="0.92"/>
<path d="M32.0 390.3l1.6 -1.2h5.6v6.6l-1.6 1.2h-5.6z" fill="#3f97dc"/>
<path d="M32.0 390.3h5.6v6.6h-5.6z" fill="#5fb0ec"/>
<path d="M40.4 389.1v7.6" fill="none" stroke="#555" stroke-width="0.6"/>
<path d="M32.0 397.4h6.5" fill="none" stroke="#999" stroke-width="0.7"/>
<text x="48.0" y="395.1" font-size="6.2" fill="#1c1c1c" font-weight="400" text-anchor="start" textLength="19.2" lengthAdjust="spacingAndGlyphs">押し出し</text>
<text x="67.5" y="395.1" font-size="6.2" fill="#1c1c1c" font-weight="400" text-anchor="start" textLength="10.4" lengthAdjust="spacingAndGlyphs">572</text>
<rect x="31.0" y="400.7" width="52.0" height="9.8" fill="#f1f1f1" opacity="0.92"/>
<path d="M32.0 403.0l1.6 -1.2h5.6v6.6l-1.6 1.2h-5.6z" fill="#3f97dc"/>
<path d="M32.0 403.0h5.6v6.6h-5.6z" fill="#5fb0ec"/>
<path d="M40.4 401.8v7.6" fill="none" stroke="#555" stroke-width="0.6"/>
<path d="M32.0 410.1h6.5" fill="none" stroke="#999" stroke-width="0.7"/>
<text x="48.0" y="407.8" font-size="6.2" fill="#1c1c1c" font-weight="400" text-anchor="start" textLength="19.2" lengthAdjust="spacingAndGlyphs">押し出し</text>
<text x="67.5" y="407.8" font-size="6.2" fill="#1c1c1c" font-weight="400" text-anchor="start" textLength="10.4" lengthAdjust="spacingAndGlyphs">575</text>
<rect x="31.0" y="413.4" width="52.0" height="9.8" fill="#f1f1f1" opacity="0.92"/>
<path d="M32.0 415.7l1.6 -1.2h5.6v6.6l-1.6 1.2h-5.6z" fill="#3f97dc"/>
<path d="M32.0 415.7h5.6v6.6h-5.6z" fill="#5fb0ec"/>
<path d="M40.4 414.5v7.6" fill="none" stroke="#555" stroke-width="0.6"/>
<path d="M32.0 422.8h6.5" fill="none" stroke="#999" stroke-width="0.7"/>
<text x="48.0" y="420.5" font-size="6.2" fill="#1c1c1c" font-weight="400" text-anchor="start" textLength="19.2" lengthAdjust="spacingAndGlyphs">押し出し</text>
<text x="67.5" y="420.5" font-size="6.2" fill="#1c1c1c" font-weight="400" text-anchor="start" textLength="10.4" lengthAdjust="spacingAndGlyphs">592</text>
<rect x="31.0" y="426.2" width="52.0" height="9.8" fill="#f1f1f1" opacity="0.92"/>
<path d="M32.0 428.5l1.6 -1.2h5.6v6.6l-1.6 1.2h-5.6z" fill="#3f97dc"/>
<path d="M32.0 428.5h5.6v6.6h-5.6z" fill="#5fb0ec"/>
<path d="M40.4 427.3v7.6" fill="none" stroke="#555" stroke-width="0.6"/>
<path d="M32.0 435.6h6.5" fill="none" stroke="#999" stroke-width="0.7"/>
<text x="48.0" y="433.3" font-size="6.2" fill="#1c1c1c" font-weight="400" text-anchor="start" textLength="19.2" lengthAdjust="spacingAndGlyphs">押し出し</text>
<text x="67.5" y="433.3" font-size="6.2" fill="#1c1c1c" font-weight="400" text-anchor="start" textLength="10.4" lengthAdjust="spacingAndGlyphs">593</text>
<rect x="31.0" y="438.9" width="52.0" height="9.8" fill="#f1f1f1" opacity="0.92"/>
<path d="M32.0 441.2l1.6 -1.2h5.6v6.6l-1.6 1.2h-5.6z" fill="#3f97dc"/>
<path d="M32.0 441.2h5.6v6.6h-5.6z" fill="#5fb0ec"/>
<path d="M40.4 440.0v7.6" fill="none" stroke="#555" stroke-width="0.6"/>
<path d="M32.0 448.3h6.5" fill="none" stroke="#999" stroke-width="0.7"/>
<text x="48.0" y="446.0" font-size="6.2" fill="#1c1c1c" font-weight="400" text-anchor="start" textLength="19.2" lengthAdjust="spacingAndGlyphs">押し出し</text>
<text x="67.5" y="446.0" font-size="6.2" fill="#1c1c1c" font-weight="400" text-anchor="start" textLength="10.4" lengthAdjust="spacingAndGlyphs">594</text>
<rect x="31.0" y="451.6" width="52.0" height="9.8" fill="#f1f1f1" opacity="0.92"/>
<path d="M32.0 453.9l1.6 -1.2h5.6v6.6l-1.6 1.2h-5.6z" fill="#3f97dc"/>
<path d="M32.0 453.9h5.6v6.6h-5.6z" fill="#5fb0ec"/>
<path d="M40.4 452.7v7.6" fill="none" stroke="#555" stroke-width="0.6"/>
<path d="M32.0 461.0h6.5" fill="none" stroke="#999" stroke-width="0.7"/>
<text x="48.0" y="458.7" font-size="6.2" fill="#1c1c1c" font-weight="400" text-anchor="start" textLength="19.2" lengthAdjust="spacingAndGlyphs">押し出し</text>
<text x="67.5" y="458.7" font-size="6.2" fill="#1c1c1c" font-weight="400" text-anchor="start" textLength="10.4" lengthAdjust="spacingAndGlyphs">595</text>
<rect x="31.0" y="464.4" width="52.0" height="9.8" fill="#f1f1f1" opacity="0.92"/>
<path d="M32.0 466.7l1.6 -1.2h5.6v6.6l-1.6 1.2h-5.6z" fill="#3f97dc"/>
<path d="M32.0 466.7h5.6v6.6h-5.6z" fill="#5fb0ec"/>
<path d="M40.4 465.5v7.6" fill="none" stroke="#555" stroke-width="0.6"/>
<path d="M32.0 473.8h6.5" fill="none" stroke="#999" stroke-width="0.7"/>
<text x="48.0" y="471.5" font-size="6.2" fill="#1c1c1c" font-weight="400" text-anchor="start" textLength="19.2" lengthAdjust="spacingAndGlyphs">押し出し</text>
<text x="67.5" y="471.5" font-size="6.2" fill="#1c1c1c" font-weight="400" text-anchor="start" textLength="10.4" lengthAdjust="spacingAndGlyphs">596</text>
<rect x="31.0" y="477.1" width="52.0" height="9.8" fill="#f1f1f1" opacity="0.92"/>
<path d="M32.0 479.4l1.6 -1.2h5.6v6.6l-1.6 1.2h-5.6z" fill="#3f97dc"/>
<path d="M32.0 479.4h5.6v6.6h-5.6z" fill="#5fb0ec"/>
<path d="M40.4 478.2v7.6" fill="none" stroke="#555" stroke-width="0.6"/>
<path d="M32.0 486.5h6.5" fill="none" stroke="#999" stroke-width="0.7"/>
<text x="48.0" y="484.2" font-size="6.2" fill="#1c1c1c" font-weight="400" text-anchor="start" textLength="19.2" lengthAdjust="spacingAndGlyphs">押し出し</text>
<text x="67.5" y="484.2" font-size="6.2" fill="#1c1c1c" font-weight="400" text-anchor="start" textLength="10.4" lengthAdjust="spacingAndGlyphs">597</text>
<rect x="31.0" y="489.8" width="52.0" height="9.8" fill="#f1f1f1" opacity="0.92"/>
<path d="M32.0 492.1l1.6 -1.2h5.6v6.6l-1.6 1.2h-5.6z" fill="#3f97dc"/>
<path d="M32.0 492.1h5.6v6.6h-5.6z" fill="#5fb0ec"/>
<path d="M40.4 490.9v7.6" fill="none" stroke="#555" stroke-width="0.6"/>
<path d="M32.0 499.2h6.5" fill="none" stroke="#999" stroke-width="0.7"/>
<text x="48.0" y="496.9" font-size="6.2" fill="#1c1c1c" font-weight="400" text-anchor="start" textLength="19.2" lengthAdjust="spacingAndGlyphs">押し出し</text>
<text x="67.5" y="496.9" font-size="6.2" fill="#1c1c1c" font-weight="400" text-anchor="start" textLength="10.4" lengthAdjust="spacingAndGlyphs">598</text>
<rect x="31.0" y="502.6" width="52.0" height="9.8" fill="#f1f1f1" opacity="0.92"/>
<path d="M32.0 504.9l1.6 -1.2h5.6v6.6l-1.6 1.2h-5.6z" fill="#3f97dc"/>
<path d="M32.0 504.9h5.6v6.6h-5.6z" fill="#5fb0ec"/>
<path d="M40.4 503.7v7.6" fill="none" stroke="#555" stroke-width="0.6"/>
<path d="M32.0 512.0h6.5" fill="none" stroke="#999" stroke-width="0.7"/>
<text x="48.0" y="509.7" font-size="6.2" fill="#1c1c1c" font-weight="400" text-anchor="start" textLength="19.2" lengthAdjust="spacingAndGlyphs">押し出し</text>
<text x="67.5" y="509.7" font-size="6.2" fill="#1c1c1c" font-weight="400" text-anchor="start" textLength="10.4" lengthAdjust="spacingAndGlyphs">599</text>
<rect x="31.0" y="515.3" width="53.0" height="9.8" fill="#f1f1f1" opacity="0.92"/>
<path d="M32.0 524.4v-5a3.5 3.5 0 0 1 3.5-3.5h1.2a4.6 4.6 0 0 1 4.4 4.6v3.9z" fill="#f4f4f4" stroke="#6e7686" stroke-width="0.8"/>
<path d="M36.8 516.6a4 4 0 0 1 3.6 3.8" fill="none" stroke="#3f97dc" stroke-width="1.4"/>
<text x="48.0" y="522.4" font-size="6.2" fill="#1c1c1c" font-weight="400" text-anchor="start" textLength="19.2" lengthAdjust="spacingAndGlyphs">フィレット</text>
<text x="67.5" y="522.4" font-size="6.2" fill="#1c1c1c" font-weight="400" text-anchor="start" textLength="10.4" lengthAdjust="spacingAndGlyphs">628</text>
<rect x="3.0" y="540.3" width="158.5" height="12.6" fill="#f1f1f1" rx="1" stroke="#dcdcdc" stroke-width="0.6"/>
<text x="14.3" y="548.8" font-size="5.6" fill="#333" font-weight="400" text-anchor="start" textLength="17.0" lengthAdjust="spacingAndGlyphs">コメント</text>
<circle cx="152.4" cy="546.8" r="1.9" fill="#222"/><rect x="151.2" y="546.5" width="2.4" height=".6" fill="#fff"/><rect x="152.1" y="545.6" width=".6" height="2.4" fill="#fff"/>
<rect x="159.0" y="544.0" width="1.0" height="5.4" fill="#bbb"/>
</g>
<g id="chrome">
<rect x="1.60" y="5.60" width="7.20" height="8.60" fill="#f7c89a" rx="1"/>
<text x="3.0" y="13.2" font-size="8" fill="#e8741c" font-weight="bold" text-anchor="start">F</text>
<text x="12.2" y="13.2" font-size="7.2" fill="#111" font-weight="normal" text-anchor="start" textLength="127.0" lengthAdjust="spacingAndGlyphs">Autodesk Fusion 360 (個人用 - 商用利用不可)</text>
<path d="M954.6 9.6h5.6" fill="none" stroke="#222" stroke-width="0.9"/>
<rect x="979.60" y="7.60" width="4.00" height="4.00" fill="#fff" stroke="#222" stroke-width="0.8"/>
<path d="M981 7.6v-1.2h4.2v4.2h-1.4" fill="none" stroke="#222" stroke-width="0.8"/>
<path d="M1003.4 6.6l5.4 5.4M1008.8 6.6l-5.4 5.4" fill="none" stroke="#111" stroke-width="0.9"/>
<rect x="4.80" y="20.60" width="2.00" height="2.00" fill="#545454"/>
<rect x="4.80" y="23.20" width="2.00" height="2.00" fill="#545454"/>
<rect x="4.80" y="25.80" width="2.00" height="2.00" fill="#545454"/>
<rect x="7.40" y="20.60" width="2.00" height="2.00" fill="#545454"/>
<rect x="7.40" y="23.20" width="2.00" height="2.00" fill="#545454"/>
<rect x="7.40" y="25.80" width="2.00" height="2.00" fill="#545454"/>
<rect x="10.00" y="20.60" width="2.00" height="2.00" fill="#545454"/>
<rect x="10.00" y="23.20" width="2.00" height="2.00" fill="#545454"/>
<rect x="10.00" y="25.80" width="2.00" height="2.00" fill="#545454"/>
<path d="M22.6 20.6h4.2l2.4 2.4v5.8h-6.6z" fill="#545454"/>
<path d="M33.0 24.2h3l-1.5 1.8z" fill="#545454"/>
<path d="M46.4 20.8h7v7.6h-7z" fill="none" stroke="#545454" stroke-width="1.2"/>
<rect x="48.00" y="20.80" width="3.60" height="2.60" fill="#545454"/>
<rect x="48.20" y="25.60" width="3.40" height="2.80" fill="#545454"/>
<path d="M70.6 27.6c0-3.4-2.6-4.4-6-3.6" fill="none" stroke="#545454" stroke-width="1.1"/>
<path d="M63.4 24.2l3.4-3v5.2z" fill="#545454"/>
<path d="M74.6 24.2h3l-1.5 1.8z" fill="#545454"/>
<path d="M85.6 27.6c0-3.4 2.6-4.4 6-3.6" fill="none" stroke="#a5a5a5" stroke-width="1.1"/>
<path d="M92.8 24.2l-3.4-3v5.2z" fill="#a5a5a5"/>
<path d="M95.4 24.2h3l-1.5 1.8z" fill="#a5a5a5"/>
<path d="M286.2 25.4h4.2v3.6h-4.2z" fill="#666"/>
<path d="M287 25.4v-1.4a1.3 1.3 0 0 1 2.6 0v1.4" fill="none" stroke="#666" stroke-width="0.7"/>
<text x="293.4" y="28.6" font-size="5.8" fill="#444" font-weight="normal" text-anchor="start" textLength="11.6" lengthAdjust="spacingAndGlyphs">無題</text>
<path d="M486.4 23.6l3.6 3.6M490 23.6l-3.6 3.6" fill="none" stroke="#555" stroke-width="0.7"/>
<path d="M662.4 22.4l3.4-1l3.6 1.2v4.6l-3.6 1.6l-3.4-1.6z" fill="#555"/>
<path d="M662.4 22.4l3.4 1.4l3.6-1.2M665.8 23.8v5" fill="none" stroke="#999" stroke-width="0.5"/>
<text x="672.6" y="28.4" font-size="6" fill="#222" font-weight="normal" text-anchor="start" textLength="41.0" lengthAdjust="spacingAndGlyphs">HX-10DP v24*</text>
<path d="M879.6 23.8l3.6 3.6M883.2 23.8l-3.6 3.6" fill="none" stroke="#555" stroke-width="0.7"/>
<path d="M892.6 25.6h7M896.1 22.1v7" fill="none" stroke="#666" stroke-width="1.1"/>
<path d="M911.4 21.4h4.4l1.6 1.6v5.6h-6z" fill="#555"/>
<path d="M915.4 28l3.6-4.6l1 .8l-3.4 4.6z" fill="#555" stroke="#c8c8c8" stroke-width="0.4"/>
<text x="921.4" y="27.6" font-size="5.6" fill="#333" font-weight="normal" text-anchor="start" textLength="10.4" lengthAdjust="spacingAndGlyphs">8/10</text>
<circle cx="949.40" cy="25.40" r="3.60" fill="#777"/>
<circle cx="949.40" cy="25.40" r="2.40" fill="#aaa"/>
<path d="M949.4 23.6v2h1.6" fill="none" stroke="#555" stroke-width="0.8"/>
<path d="M964.2 27.4c1.2-1 .8-4.6 2.8-5.4c2 .8 1.6 4.4 2.8 5.4z" fill="#555"/>
<circle cx="967.00" cy="28.20" r="0.90" fill="#555"/>
<circle cx="967.00" cy="21.80" r="0.60" fill="#555"/>
<circle cx="984.60" cy="25.40" r="3.60" fill="#444"/>
<text x="984.6" y="27.6" font-size="6" fill="#e8e8e8" font-weight="bold" text-anchor="middle">?</text>
<defs><clipPath id="av"><circle cx="1006.3" cy="25" r="6"/></clipPath><linearGradient id="avg" x1="0" y1="0" x2="0" y2="1"><stop offset="0" stop-color="#a9c3e6"/><stop offset="1" stop-color="#6f93c6"/></linearGradient></defs>
<circle cx="1006.30" cy="25.00" r="6.00" fill="url(#avg)"/>
<g clip-path="url(#av)" fill="#4a5d78"><circle cx="1006.3" cy="23.2" r="2.9"/><path d="M1000.6 32c0-4 2.4-5.4 5.7-5.4s5.7 1.4 5.7 5.4z"/></g>
<rect x="6.60" y="39.60" width="57.40" height="34.40" fill="#f3f3f3" rx="2.6" stroke="#e1e1e1" stroke-width="0.7"/>
<text x="22.0" y="57.0" font-size="6.2" fill="#111" font-weight="bold" text-anchor="start" textLength="19.4" lengthAdjust="spacingAndGlyphs">デザイン</text>
<path d="M44.6 54.4h3l-1.5 1.8z" fill="#222"/>
<text x="79.4" y="41.4" font-size="5.6" fill="#0f86d6" font-weight="bold" text-anchor="start" textLength="17.0" lengthAdjust="spacingAndGlyphs">ソリッド</text>
<text x="120.4" y="41.4" font-size="5.6" fill="#333" font-weight="normal" text-anchor="start" textLength="22.4" lengthAdjust="spacingAndGlyphs">サーフェス</text>
<text x="167.6" y="41.4" font-size="5.6" fill="#333" font-weight="normal" text-anchor="start" textLength="15.6" lengthAdjust="spacingAndGlyphs">メッシュ</text>
<text x="206.4" y="41.4" font-size="5.6" fill="#333" font-weight="normal" text-anchor="start" textLength="17.6" lengthAdjust="spacingAndGlyphs">フォーム</text>
<text x="247.4" y="41.4" font-size="5.6" fill="#333" font-weight="normal" text-anchor="start" textLength="28.6" lengthAdjust="spacingAndGlyphs">シート メタル</text>
<text x="299.6" y="41.4" font-size="5.6" fill="#333" font-weight="normal" text-anchor="start" textLength="24.6" lengthAdjust="spacingAndGlyphs">プラスチック</text>
<text x="349.6" y="41.4" font-size="5.6" fill="#333" font-weight="normal" text-anchor="start" textLength="27.6" lengthAdjust="spacingAndGlyphs">ユーティリティ</text>
<rect x="73.60" y="44.60" width="29.60" height="1.50" fill="#1b8edb"/>
<rect x="186.40" y="47.60" width="0.70" height="26.40" fill="#dcdcdc"/>
<rect x="330.40" y="47.60" width="0.70" height="26.40" fill="#dcdcdc"/>
<rect x="381.20" y="47.60" width="0.70" height="26.40" fill="#dcdcdc"/>
<rect x="412.40" y="47.60" width="0.70" height="26.40" fill="#dcdcdc"/>
<rect x="443.40" y="47.60" width="0.70" height="26.40" fill="#dcdcdc"/>
<rect x="474.40" y="47.60" width="0.70" height="26.40" fill="#dcdcdc"/>
<text x="117.0" y="73.0" font-size="5.6" fill="#333" font-weight="normal" text-anchor="start" textLength="10.6" lengthAdjust="spacingAndGlyphs">作成</text>
<path d="M129.8 70.2h3l-1.5 1.8z" fill="#333"/>
<text x="248.6" y="73.0" font-size="5.6" fill="#333" font-weight="normal" text-anchor="start" textLength="10.0" lengthAdjust="spacingAndGlyphs">修正</text>
<path d="M260.2 70.2h3l-1.5 1.8z" fill="#333"/>
<text x="341.6" y="73.0" font-size="5.6" fill="#333" font-weight="normal" text-anchor="start" textLength="21.0" lengthAdjust="spacingAndGlyphs">アセンブリ</text>
<path d="M363.2 70.2h3l-1.5 1.8z" fill="#333"/>
<text x="388.4" y="73.0" font-size="5.6" fill="#333" font-weight="normal" text-anchor="start" textLength="10.0" lengthAdjust="spacingAndGlyphs">構築</text>
<path d="M400.0 70.2h3l-1.5 1.8z" fill="#333"/>
<text x="419.4" y="73.0" font-size="5.6" fill="#333" font-weight="normal" text-anchor="start" textLength="10.6" lengthAdjust="spacingAndGlyphs">検査</text>
<path d="M432.0 70.2h3l-1.5 1.8z" fill="#333"/>
<text x="451.0" y="73.0" font-size="5.6" fill="#333" font-weight="normal" text-anchor="start" textLength="10.4" lengthAdjust="spacingAndGlyphs">挿入</text>
<path d="M463.2 70.2h3l-1.5 1.8z" fill="#333"/>
<text x="482.0" y="73.0" font-size="5.6" fill="#333" font-weight="normal" text-anchor="start" textLength="10.4" lengthAdjust="spacingAndGlyphs">選択</text>
<path d="M494.4 70.2h3l-1.5 1.8z" fill="#333"/>
<rect x="74.00" y="49.00" width="14.40" height="14.40" fill="#f6f6f6" stroke="#555" stroke-width="0.6"/>
<rect x="73.30" y="48.30" width="1.40" height="1.40" fill="#333"/>
<rect x="87.70" y="48.30" width="1.40" height="1.40" fill="#333"/>
<rect x="73.30" y="62.70" width="1.40" height="1.40" fill="#333"/>
<rect x="87.70" y="62.70" width="1.40" height="1.40" fill="#333"/>
<path d="M77.4 52.4h7.8c0 4.6-3 7.6-7.8 7.6z" fill="none" stroke="#666" stroke-width="0.7"/>
<rect x="76.80" y="51.80" width="1.20" height="1.20" fill="#444"/>
<rect x="84.60" y="51.80" width="1.20" height="1.20" fill="#444"/>
<rect x="76.80" y="59.40" width="1.20" height="1.20" fill="#444"/>
<path d="M86 57.4v7.6M82.2 61.2h7.6" fill="none" stroke="#1e9e3a" stroke-width="2.2"/>
<path d="M96.4 61h10.6l2.6-1.6v2.2l-2.6 1.8h-10.6z" fill="#c2c2c2" stroke="#8a8a8a" stroke-width="0.4"/>
<path d="M96.6 50.4l2.6-2.4h10.2v11.4l-2.6 2.2h-10.2z" fill="#3f97dc"/>
<path d="M96.6 50.4h10.2v11.2h-10.2z" fill="#5fb0ec"/>
<path d="M96.6 50.4l2.6-2.4h10.2l-2.6 2.4z" fill="#8ccaf6"/>
<path d="M111 49.6v11.6" fill="none" stroke="#333" stroke-width="0.7"/>
<path d="M111 48.4l1.2 2h-2.4z" fill="#333"/>
<path d="M118.4 56.4c3.4-5.6 12.6-6.6 17-1.2l0 4.6l-3.2 2.4c-3-2.4-6.6-2.2-9.6 1.2l-4.2-2.6z" fill="#5fb0ec" stroke="#3f97dc" stroke-width="0.5"/>
<path d="M118.4 56.4c3.4-5.6 12.6-6.6 17-1.2l-3.2 2.2c-3-2.6-6.6-2.4-9.6 .8z" fill="#8ccaf6"/>
<path d="M132.2 57.4l3.2-2.2v4.6l-3.2 2.4z" fill="#f2f2f2" stroke="#8a8a8a" stroke-width="0.4"/>
<path d="M119.6 51c3.6-3.4 10.6-3.6 14.4-.6" fill="none" stroke="#333" stroke-width="0.7"/>
<path d="M118.6 52l.6-2.6l2 1.8z" fill="#333"/>
<path d="M141.6 51l3-3h13.6v12.6l-3 3.6h-13.6z" fill="#c2c2c2" stroke="#8a8a8a" stroke-width="0.5"/>
<path d="M141.6 51h13.6v13.2h-13.6z" fill="#dcdcdc" stroke="#8a8a8a" stroke-width="0.4"/>
<path d="M141.6 51l3-3h13.6l-3 3z" fill="#ededed" stroke="#8a8a8a" stroke-width="0.4"/>
<circle cx="148.00" cy="57.40" r="4.40" fill="#5fb0ec" stroke="#777" stroke-width="0.5"/>
<path d="M146.6 54.2a3.4 3.4 0 0 1 5 4.6a5 5 0 0 0 -5 -4.6z" fill="#f4f4f4"/>
<path d="M166 52.4h13M167.8 52.4v11.4M166 63.8h13" fill="none" stroke="#777" stroke-width="0.6"/>
<rect x="165.80" y="50.40" width="3.80" height="3.80" fill="#fff" stroke="#666" stroke-width="0.6"/>
<rect x="176.40" y="50.20" width="4.00" height="4.00" fill="#5fb0ec"/>
<rect x="165.60" y="61.60" width="4.00" height="4.00" fill="#5fb0ec"/>
<rect x="176.40" y="61.60" width="4.00" height="4.00" fill="#5fb0ec"/>
<path d="M193.6 50.6l3-3h6.6v14l-3 3h-6.6z" fill="#ededed" stroke="#8a8a8a" stroke-width="0.5"/>
<path d="M197.6 49.4l2.4-2h4v14.4l-2.4 2.2h-4z" fill="#3f97dc"/>
<path d="M197.6 49.4h3.6v14.6h-3.6z" fill="#5fb0ec"/>
<path d="M203.6 56h3.4" fill="none" stroke="#333" stroke-width="0.8"/>
<path d="M208.6 56l-2.2-1.3v2.6z" fill="#333"/>
<path d="M215.6 64.2v-11.6l4.4-5h4.6a8 8 0 0 1 8 8v5.8l-3 2.8z" fill="#dcdcdc" stroke="#8a8a8a" stroke-width="0.5"/>
<path d="M221.6 47.8h3a8 8 0 0 1 8 8v2.4l-3 .6v-1.6a6.4 6.4 0 0 0-6.4-6.4h-3.6z" fill="#5fb0ec"/>
<path d="M215.6 52.6h5.4a8.6 8.6 0 0 1 8.6 8.6v3" fill="none" stroke="#8a8a8a" stroke-width="0.4"/>
<path d="M238.4 51l3-3h14.2v12.6l-3 3.6h-14.2z" fill="#c2c2c2" stroke="#8a8a8a" stroke-width="0.5"/>
<path d="M238.4 51h14.2v13.2h-14.2z" fill="#ededed" stroke="#8a8a8a" stroke-width="0.4"/>
<path d="M238.4 51l3-3h14.2l-3 3z" fill="#f6f6f6" stroke="#8a8a8a" stroke-width="0.4"/>
<path d="M241.4 54.2h3.4v4.6h4.6v3h-8z" fill="#3f97dc"/>
<path d="M244.8 58.8h4.6v3h-4.6z" fill="#8ccaf6"/>
<path d="M261.4 56.4l2-2h3.6v-4.6l2.4-2h9.2v9.4l-2.2 2.4h-3.4v4.2l-2.4 2.2h-9.2z" fill="#3f97dc"/>
<path d="M261.4 56.4h9.2v9.6h-9.2zM267 49.8h9.4v9.6h-5.8v-3h-3.6z" fill="#5fb0ec"/>
<path d="M267 49.8l2.4-2h9.2l-2.2 2zM261.4 56.4l2-2h3.6v2z" fill="#8ccaf6"/>
<path d="M285.6 58.4h11.6l2.6-1.6v5l-2.6 2.4h-11.6z" fill="#dcdcdc" stroke="#8a8a8a" stroke-width="0.4"/>
<path d="M285.6 58.6h11.6v5.6h-11.6z" fill="#ededed"/>
<path d="M285.6 50.2l2.6-2.2h11.6v5.2l-2.6 2.2h-11.6z" fill="#3f97dc"/>
<path d="M285.6 50.2h11.6v5.2h-11.6z" fill="#5fb0ec"/>
<path d="M285.6 50.2l2.6-2.2h11.6l-2.6 2.2z" fill="#8ccaf6"/>
<path d="M284.6 57.4h12.6l3.6-3" fill="none" stroke="#8ccaf6" stroke-width="0.9"/>
<path d="M315.4 48.4v15.6M307.6 56.2h15.6" fill="none" stroke="#111" stroke-width="1.3"/>
<path d="M315.4 46.6l2.2 3h-4.4zM315.4 65.8l2.2-3h-4.4zM305.8 56.2l3-2.2v4.4zM325 56.2l-3-2.2v4.4z" fill="#111"/>
<path d="M335.6 53.4l1.6-2.6h6.4v6h-8z" fill="#3f97dc"/>
<path d="M335.6 53.4h6.6v5.6h-6.6z" fill="#5fb0ec"/>
<path d="M335.6 59h6.6v5.4h-6.6zM342.6 58.6h6.2v5.8h-6.2z" fill="#dcdcdc" stroke="#8a8a8a" stroke-width="0.4"/>
<path d="M342.6 58.6l1.6-2.4h6v5.8l-1.4 2.4v-5.8z" fill="#ededed" stroke="#8a8a8a" stroke-width="0.4"/>
<circle cx="348.20" cy="51.40" r="2.60" fill="#f7a51c"/>
<g stroke="#f7a51c" stroke-width=".9"><line x1="351.20" y1="51.40" x2="352.60" y2="51.40"/><line x1="350.32" y1="53.52" x2="351.31" y2="54.51"/><line x1="348.20" y1="54.40" x2="348.20" y2="55.80"/><line x1="346.08" y1="53.52" x2="345.09" y2="54.51"/><line x1="345.20" y1="51.40" x2="343.80" y2="51.40"/><line x1="346.08" y1="49.28" x2="345.09" y2="48.29"/><line x1="348.20" y1="48.40" x2="348.20" y2="47.00"/><line x1="350.32" y1="49.28" x2="351.31" y2="48.29"/></g>
<path d="M359.6 53l3-4h2.4v10l-3.4 4.6h-2z" fill="#c2c2c2" stroke="#8a8a8a" stroke-width="0.5"/>
<path d="M368.4 50l2-1l4 5v9.4l-2 .2l-4-5z" fill="#c2c2c2" stroke="#8a8a8a" stroke-width="0.5"/>
<path d="M365 52.6l3.4 1v5l-3.4 1.4z" fill="#5fb0ec"/>
<path d="M362.6 49.6v10.4M370.6 50v9" fill="none" stroke="#f2f2f2" stroke-width="0.8"/>
<path d="M388.6 52.6l5-5h2.2v12l-5 4.6h-2.2z" fill="#ededed" stroke="#8a8a8a" stroke-width="0.5"/>
<path d="M393.6 49.6l3.6-2.2v11.6l-3.6 4.6z" fill="#3fb56a"/>
<path d="M400 51.6l4.4-3.2v10.4l-4.4 5z" fill="#e6935a"/>
<rect x="420.60" y="57.20" width="15.40" height="3.40" fill="#f5a300"/>
<path d="M421 53.6h14.6M421 51.8v3.6M435.6 51.8v3.6" fill="none" stroke="#555" stroke-width="0.6"/>
<path d="M421 53.6l1.6-.9v1.8zM435.6 53.6l-1.6-.9v1.8z" fill="#555"/>
<rect x="451.60" y="48.20" width="15.40" height="15.40" fill="#7cc4f5" stroke="#dfeffc" stroke-width="0.6"/>
<path d="M452 63.2v-4.6l4.4-4l3.6 4l2.2-2l4.4 3.6v3z" fill="#3b8fcf"/>
<circle cx="462.80" cy="52.40" r="1.50" fill="#fff6c2"/>
<rect x="480.60" y="46.00" width="20.40" height="20.60" fill="#1690d8"/>
<rect x="482.60" y="47.80" width="14.40" height="12.00" fill="none" stroke="#59d46a" stroke-width="0.8" stroke-dasharray="1.2 1.2"/>
<path d="M494 56l0 8.6l2-1.8l1.4 3l1.2-.6l-1.4-3l2.6-.2z" fill="#fff"/>
<rect x="446.60" y="540.60" width="125.60" height="12.00" fill="#f1f1f1" rx="1" opacity="0.93"/>
<path d="M453.4 543.4v7.2M449.8 547h7.2" fill="none" stroke="#444" stroke-width="1"/>
<circle cx="453.40" cy="547.00" r="1.60" fill="#f0f0f0" stroke="#444" stroke-width="0.7"/>
<path d="M449 547l1.4-1v2zM457.8 547l-1.4-1v2zM453.4 542.6l1 1.4h-2zM453.4 551.4l1-1.4h-2z" fill="#444"/>
<path d="M459.6 546.4h3l-1.5 1.8z" fill="#444"/>
<rect x="465.40" y="544.60" width="7.40" height="5.00" fill="#cfcfcf" stroke="#444" stroke-width="0.9"/>
<path d="M466.6 544.8l1-1.4h3l1 1.4" fill="none" stroke="#444" stroke-width="0.7"/>
<path d="M467 547h4.2" fill="none" stroke="#444" stroke-width="0.6"/>
<path d="M480.4 550.6c-1.6-1.4-2.2-3-1.4-3.6l1 .8v-3.4c0-.6.9-.6.9 0v-1c0-.6.9-.6.9 0v.4c0-.6.9-.6.9 0v.8c0-.5.9-.5.9 0v3.6c0 1.2-.6 1.8-1 2.4z" fill="#eee" stroke="#444" stroke-width="0.6"/>
<circle cx="496.40" cy="546.20" r="2.40" fill="#f4f4f4" stroke="#444" stroke-width="1"/>
<path d="M498.2 548l2.2 2.4" fill="none" stroke="#444" stroke-width="1"/>
<path d="M499.6 543.4v2.4M498.4 544.6h2.4" fill="none" stroke="#444" stroke-width="0.5"/>
<circle cx="511.40" cy="546.20" r="2.90" fill="#f4f4f4" stroke="#444" stroke-width="1.1"/>
<path d="M513.4 548.2l2.4 2.6" fill="none" stroke="#444" stroke-width="1.1"/>
<path d="M517.4 546.4h3l-1.5 1.8z" fill="#444"/>
<rect x="526.40" y="543.40" width="7.60" height="5.40" fill="#6aa9e0" stroke="#456" stroke-width="0.6"/>
<path d="M528.6 550.8h3.2M530.2 548.8v2" fill="none" stroke="#456" stroke-width="0.7"/>
<path d="M535.8 546.4h3l-1.5 1.8z" fill="#444"/>
<rect x="542.40" y="543.20" width="7.00" height="7.00" fill="#9a9a9a" stroke="#666" stroke-width="0.5"/>
<path d="M551.4 546.4h3l-1.5 1.8z" fill="#444"/>
<rect x="558.60" y="543.20" width="7.80" height="7.00" fill="#5b8fd0" stroke="#345" stroke-width="0.5"/>
<path d="M562.5 543.2v7M558.6 546.7h7.8" fill="none" stroke="#e8eef8" stroke-width="0.6"/>
<path d="M568.4 546.4h3l-1.5 1.8z" fill="#444"/>
</g>
</svg>
</body></html>
